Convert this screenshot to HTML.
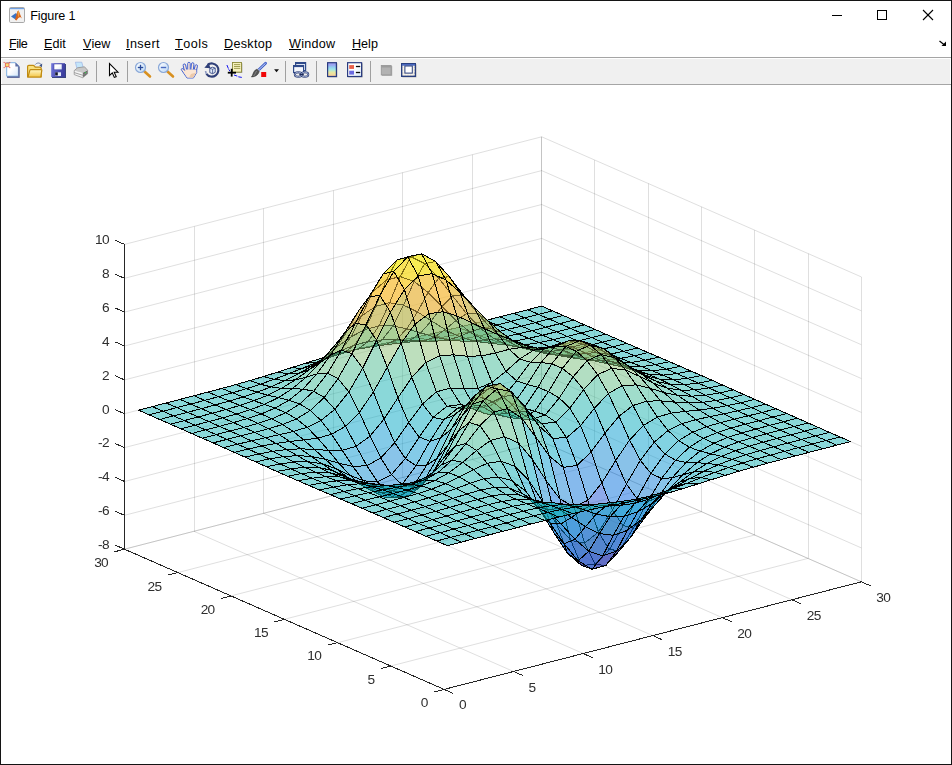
<!DOCTYPE html>
<html><head><meta charset="utf-8"><title>Figure 1</title>
<style>
html,body{margin:0;padding:0;background:#fff;}
body{width:952px;height:765px;position:relative;overflow:hidden;font-family:"Liberation Sans",Arial,sans-serif;}
#win{position:absolute;left:0;top:0;width:950px;height:763px;border:1px solid #141414;background:#fff;}
#title{position:absolute;left:30.2px;top:6.6px;letter-spacing:-0.12px;font-size:12.6px;color:#000;line-height:18px;white-space:nowrap;}
#menu{position:absolute;left:0;top:34.6px;height:18px;font-size:12.6px;color:#000;line-height:18px;white-space:nowrap;}
#menu span{position:absolute;top:0;}
#menu u{text-decoration:none;position:relative;display:inline-block;}
#menu u::after{content:"";position:absolute;left:0;right:0;top:14.4px;height:1px;background:#000;}
#tb{position:absolute;left:1px;top:57px;width:950px;height:26px;background:#f0f0f0;border-top:1px solid #a5a5a5;border-bottom:1px solid #a5a5a5;box-shadow:inset 0 1px 0 #fff, inset 1px 0 0 #fff, inset -1px 0 0 #fff;}
#chrome{position:absolute;left:0;top:0;}
</style></head><body>
<div id="win"></div>
<div id="title">Figure 1</div>
<div id="menu">
<span style="left:9px;letter-spacing:-0.5px"><u>F</u>ile</span>
<span style="left:44px"><u>E</u>dit</span>
<span style="left:83px"><u>V</u>iew</span>
<span style="left:126px;letter-spacing:0.4px"><u>I</u>nsert</span>
<span style="left:175px;letter-spacing:0.5px"><u>T</u>ools</span>
<span style="left:224px;letter-spacing:0.3px"><u>D</u>esktop</span>
<span style="left:289px;letter-spacing:0.25px"><u>W</u>indow</span>
<span style="left:352px"><u>H</u>elp</span>
</div>
<div id="tb"></div>
<svg id="chrome" width="952" height="90" viewBox="0 0 952 90">
<defs>
<linearGradient id="gpage" x1="0" y1="0" x2="1" y2="1"><stop offset="0" stop-color="#ffffff"/><stop offset="0.45" stop-color="#ffffff"/><stop offset="1" stop-color="#d6e6f8"/></linearGradient>
<linearGradient id="gfold" x1="0" y1="0" x2="0" y2="1"><stop offset="0" stop-color="#fff8c8"/><stop offset="1" stop-color="#f3c648"/></linearGradient>
<linearGradient id="gcb" x1="0" y1="0" x2="0" y2="1"><stop offset="0" stop-color="#a09af0"/><stop offset="0.18" stop-color="#9aa8f0"/><stop offset="0.32" stop-color="#92cdf0"/><stop offset="0.5" stop-color="#a2e8e6"/><stop offset="0.7" stop-color="#e6e8a2"/><stop offset="0.85" stop-color="#f0dc9c"/><stop offset="1" stop-color="#f8bc98"/></linearGradient>
<linearGradient id="gsave" x1="0" y1="0" x2="1" y2="0.3"><stop offset="0" stop-color="#7277dc"/><stop offset="1" stop-color="#3d3fa0"/></linearGradient>
<linearGradient id="glens" x1="0" y1="0" x2="1" y2="1"><stop offset="0" stop-color="#ffffff"/><stop offset="1" stop-color="#b9d6f5"/></linearGradient>
</defs>
<!-- title icon -->
<g>
<rect x="9.5" y="7.5" width="15" height="15" rx="1.2" fill="#f1f1f1" stroke="#a8a8a8"/>
<rect x="10" y="8" width="14" height="1.3" fill="#6f9fe0"/>
<rect x="10" y="9.3" width="14" height="0.8" fill="#dbe7f7"/>
<polygon points="11,16.5 16,13 17.5,15 15.5,19.5" fill="#3b74c4"/>
<polygon points="15,19.8 17.3,11.5 18.6,10.6 20,14 21.8,18.6 20.2,17 18.4,18 16.4,20.6" fill="#d8641a"/>
<polygon points="17.4,11.6 18.6,10.6 19.6,14 18.2,17.8" fill="#f0a040"/>
</g>
<!-- window buttons -->
<g stroke="#000" stroke-width="1" fill="none" shape-rendering="crispEdges">
<line x1="832" y1="15.5" x2="842" y2="15.5"/>
<rect x="877.5" y="10.5" width="9" height="9"/>
</g>
<g stroke="#000" stroke-width="1.1" fill="none">
<line x1="923" y1="10" x2="933" y2="20"/><line x1="933" y1="10" x2="923" y2="20"/>
</g>
<!-- dock arrow -->
<g stroke="#000" stroke-width="1.3" fill="#000">
<line x1="939.5" y1="41" x2="944.5" y2="45"/>
<polygon points="946,41.5 946,46 941.5,46" stroke="none"/>
</g>
<!-- toolbar separators -->
<g stroke="#a0a0a0" stroke-width="1" shape-rendering="crispEdges">
<line x1="96.5" y1="61" x2="96.5" y2="82"/>
<line x1="127.5" y1="61" x2="127.5" y2="82"/>
<line x1="285.5" y1="61" x2="285.5" y2="82"/>
<line x1="316.5" y1="61" x2="316.5" y2="82"/>
<line x1="370.5" y1="61" x2="370.5" y2="82"/>
</g>
<!-- new -->
<g>
<path d="M7,63 H15.5 L19.5,67 V77.5 H7 Z" fill="#6470a0"/>
<path d="M6.7,62.7 H15.4 L18.4,65.7 V76.2 H6.7 Z" fill="url(#gpage)" stroke="#6fa8e0" stroke-width="0.9"/>
<path d="M15.4,62.4 L19.6,66.6 H15.4 Z" fill="#5f6fa5"/>
<path d="M18.9,66.6 V77.3 H7.2" fill="none" stroke="#6470a0" stroke-width="1.4"/>
<rect x="5.4" y="63.100" width="3.600" height="3.600" fill="#f7e070" stroke="#e6705c" stroke-width="1"/>
<g fill="#e04a3a" fill-opacity="0.8"><rect x="3.6" y="61.9" width="1.1" height="1.1"/><rect x="9.2" y="61.9" width="1.100" height="1.1"/><rect x="3.6" y="67" width="1.1" height="1.1"/><rect x="9.2" y="67" width="1.100" height="1.100"/></g>
</g>
<!-- open -->
<g>
<path d="M27.6,77 V66.500 Q27.6,65.3 28.8,65.3 H33 Q34,65.3 34.5,66.2 L35.2,67.200 H40 Q41.2,67.200 41.2,68.400 V77 Z" fill="#f9e07c" stroke="#c08a10" stroke-width="1.200" stroke-linejoin="round"/>
<path d="M28,77 L29.800,70.300 Q30,69.600 30.800,69.600 H41.200 Q42,69.600 41.800,70.400 L40.800,77 Z" fill="url(#gfold)" stroke="#c08a10" stroke-width="1.200" stroke-linejoin="round"/>
<path d="M35.200,64.600 C36.800,62.600 39.600,62.400 41.300,64.600" fill="none" stroke="#60749c" stroke-width="0.900"/>
<polygon points="42.200,63.600 41.900,67.200 39.300,65.600" fill="#3f5488"/>
</g>
<!-- save -->
<g>
<rect x="52" y="64" width="14" height="14" fill="#3a4580"/>
<rect x="51.2" y="63.200" width="13.8" height="13.8" fill="url(#gsave)"/>
<rect x="54" y="64" width="8" height="5.8" fill="url(#gpage)"/>
<rect x="54" y="64" width="8" height="5.8" fill="none" stroke="#3d3fa0" stroke-width="0.5"/>
<rect x="55.200" y="72.300" width="5.800" height="3.700" fill="#e4ecfa"/>
<rect x="55.200" y="72.300" width="2.600" height="3.200" fill="#14142a"/>
</g>
<!-- print -->
<g>
<polygon points="75.400,62.200 81.800,62.200 83.200,67.400 76.800,68.200" fill="#c4e6fa" stroke="#8fa8e0" stroke-width="0.6"/>
<polygon points="74.200,70.600 77.500,67.800 84.500,66.800 87.600,70.200 87.600,73.800 82.600,77.700 74.200,74.600" fill="#d9d9d9"/>
<polygon points="82.600,72.800 87.600,70.200 87.600,73.800 82.600,77.700" fill="#6e6e6e"/>
<polygon points="74.200,70.600 82.600,72.800 82.600,77.700 74.200,74.600" fill="#f4f4f4"/>
<polygon points="74.200,70.600 77.500,67.800 84.500,66.800 87.600,70.200 82.600,72.800" fill="#c9c9c9"/>
<polyline points="74.200,72.600 82.600,75.200 87.600,72.200" fill="none" stroke="#8c8c8c" stroke-width="0.8"/>
<polygon points="74.200,70.600 77.500,67.800 84.500,66.800 87.600,70.200 87.600,73.800 82.600,77.700 74.200,74.600" fill="none" stroke="#8a8a8a" stroke-width="0.7"/>
<rect x="84.900" y="72" width="1.200" height="1.200" fill="#35c04a"/>
</g>
<!-- pointer -->
<path d="M109.5,63.5 V75.5 L112.3,72.9 L114.3,77.4 L116.2,76.6 L114.2,72.2 L118,72.2 Z" fill="#fff" stroke="#000" stroke-width="1.1" stroke-linejoin="miter"/>
<!-- zoom in -->
<g>
<line x1="144.5" y1="71.5" x2="150" y2="76.5" stroke="#d89020" stroke-width="2.6" stroke-linecap="round"/>
<circle cx="140.5" cy="67.5" r="5" fill="url(#glens)" stroke="#8aa8d8" stroke-width="1.2"/>
<g stroke="#2a4a9a" stroke-width="1.3"><line x1="137.8" y1="67.5" x2="143.2" y2="67.5"/><line x1="140.5" y1="64.8" x2="140.5" y2="70.2"/></g>
</g>
<!-- zoom out -->
<g>
<line x1="167.5" y1="71.5" x2="173" y2="76.5" stroke="#d89020" stroke-width="2.6" stroke-linecap="round"/>
<circle cx="163.5" cy="67.5" r="5" fill="url(#glens)" stroke="#8aa8d8" stroke-width="1.2"/>
<line x1="160.8" y1="67.5" x2="166.2" y2="67.5" stroke="#4a6ac0" stroke-width="1.4"/>
</g>
<!-- hand -->
<g fill="#fbe6d4" stroke="#3558d0" stroke-width="0.9" stroke-linejoin="round">
<rect x="184.600" y="63.800" width="2.500" height="9" rx="1.250" transform="rotate(-12 185.800 72)"/>
<rect x="187.700" y="62.300" width="2.500" height="9" rx="1.250"/>
<rect x="190.700" y="62.700" width="2.500" height="9" rx="1.250" transform="rotate(6 192 71)"/>
<rect x="193.600" y="64.600" width="2.400" height="8" rx="1.200" transform="rotate(14 194.800 72)"/>
<path d="M185.500,70.800 L182.800,68.700 C181.700,68 180.800,69.300 181.600,70.200 L187,78 H193.400 L196.700,72.600 V69.500 Z"/>
<path d="M185.400,69.400 H196.200 V72.500 L193.200,77.500 H187.300 L184.600,73.400 Z" stroke="none"/>
<path d="M193.200,77.500 L196.200,72.500 L191,74 L189,77.500 Z" fill="#ecc9aa" stroke="none"/>
</g>
<!-- rotate -->
<g fill="none">
<path d="M207.600,64.900 A6.600,6.600 0 1 1 206.400,73.800" stroke="#2f3f78" stroke-width="2.100"/>
<path d="M206.400,73.800 A6.600,6.600 0 0 1 205.600,71" stroke="#8c98c0" stroke-width="1.600"/>
<polygon points="204.300,67.800 208.800,62.800 210.400,68.200" fill="#2f3f78"/>
<path d="M209.800,68.300 L212.300,67.200 L215.200,68.100 V72.300 L212.600,73.700 L209.800,72.600 Z" fill="#e4eefb" stroke="#3a4c88" stroke-width="0.9" stroke-linejoin="round"/>
<path d="M209.800,68.300 L212.600,69.300 L215.200,68.100 M212.600,69.300 V73.700" stroke="#3a4c88" stroke-width="0.8"/>
</g>
<!-- data cursor -->
<g>
<rect x="233.300" y="63.300" width="9" height="9.600" fill="#9a9a9a"/>
<rect x="232.500" y="62.500" width="9" height="9.600" fill="#f6f1bc" stroke="#8c8a3a" stroke-width="0.9"/>
<g stroke="#8c8a3a" stroke-width="0.8"><line x1="234" y1="64.600" x2="240.200" y2="64.600"/><line x1="234" y1="66.500" x2="240.200" y2="66.500"/><line x1="234" y1="68.400" x2="240.200" y2="68.400"/></g>
<path d="M226.900,65 L228.400,68.600 M228.700,69.300 L230,71.300 M234,75 L237.300,76.100 M238.300,76.800 L241.800,77.400" fill="none" stroke="#1414f0" stroke-width="1"/>
<g stroke="#000" stroke-width="1.800"><line x1="227.800" y1="72.700" x2="236" y2="72.700"/><line x1="231.700" y1="68.800" x2="231.700" y2="76.600"/></g>
</g>
<!-- brush -->
<g>
<line x1="258.300" y1="70.200" x2="265.600" y2="63.200" stroke="#3c5cc8" stroke-width="2.700" stroke-linecap="round"/>
<line x1="258.800" y1="69.700" x2="265.300" y2="63.500" stroke="#dfe7fb" stroke-width="0.900" stroke-linecap="round"/>
<line x1="257.300" y1="69" x2="259.300" y2="71.200" stroke="#c8cee0" stroke-width="1.200"/>
<path d="M257.200,69.300 L259.200,71.400 C258.600,74.600 255.200,77 251.400,77 C253,75.400 252.800,72.800 254.600,70.800 C255.600,69.700 256.400,69.200 257.200,69.300 Z" fill="#555" stroke="#2e2e2e" stroke-width="0.5"/>
<path d="M256.600,71 C255.500,72.400 255.200,74.400 253.600,76" fill="none" stroke="#9a9a9a" stroke-width="0.7"/>
<rect x="261.200" y="72" width="5" height="5" fill="#f00808"/>
</g>
<polygon points="274.100,69.200 279,69.200 276.550,72.200" fill="#111"/>
<!-- link -->
<g>
<rect x="295.600" y="62.600" width="10" height="8" fill="#eef3fc" stroke="#2f4a8a" stroke-width="1.200"/>
<rect x="295.600" y="62.600" width="10" height="1.500" fill="#2f4a8a"/>
<rect x="293.600" y="65.600" width="10" height="7" fill="#f4f7fd" stroke="#2f4a8a" stroke-width="1.200"/>
<rect x="293.600" y="65.600" width="10" height="1.500" fill="#2f4a8a"/>
<g fill="none" stroke="#2b3c72" stroke-width="1.900"><ellipse cx="298.300" cy="74.500" rx="3.500" ry="2.300"/><ellipse cx="304.800" cy="74.500" rx="3.500" ry="2.300"/></g>
<g fill="none" stroke="#c3d0f0" stroke-width="0.700"><ellipse cx="298.300" cy="74.500" rx="3.500" ry="2.300"/><ellipse cx="304.800" cy="74.500" rx="3.500" ry="2.300"/></g>
<line x1="299.300" y1="74.500" x2="303.800" y2="74.500" stroke="#1c2a5a" stroke-width="1.600"/>
</g>
<!-- colorbar -->
<rect x="328.300" y="63.300" width="9" height="14" fill="#9c9c9c"/>
<rect x="327.600" y="62.700" width="8.800" height="13.800" fill="url(#gcb)" stroke="#2a3c80" stroke-width="1.200"/>
<!-- legend -->
<g>
<rect x="348.300" y="63.300" width="14.300" height="14" fill="#9c9c9c"/>
<rect x="347.600" y="62.700" width="14" height="13.800" fill="url(#gpage)" stroke="#2a3c80" stroke-width="1.200"/>
<rect x="349.200" y="65.100" width="4.800" height="3.800" fill="#e8604a"/>
<rect x="349.200" y="70.700" width="4.800" height="3.900" fill="#6a6ae0"/>
<g stroke="#0a0a0a" stroke-width="1.300"><line x1="355.900" y1="66.500" x2="360.200" y2="66.500"/><line x1="355.900" y1="72.500" x2="360.200" y2="72.500"/></g>
</g>
<!-- hide plot tools -->
<g>
<rect x="381.900" y="66.100" width="10.300" height="9.700" fill="#a6a6a6"/>
<rect x="381.300" y="65.500" width="9.800" height="9.400" fill="#b2b2b2" stroke="#999" stroke-width="0.900"/>
<rect x="381.300" y="65.500" width="9.800" height="2" fill="#9c9c9c"/>
</g>
<!-- show plot tools -->
<g>
<rect x="402.400" y="64.300" width="14" height="13" fill="#9c9c9c"/>
<rect x="401.700" y="63.700" width="13.600" height="12.600" fill="#efe9dc" stroke="#2a4080" stroke-width="1.400"/>
<rect x="402" y="64" width="13" height="1.700" fill="#4a68c0"/>
<rect x="404.900" y="66" width="7.400" height="7.100" fill="#fff" stroke="#2a4080" stroke-width="1"/>
<g stroke="#fff" stroke-width="0.900" stroke-dasharray="0.800,0.800"><line x1="403.300" y1="66.400" x2="403.300" y2="73"/><line x1="414" y1="66.400" x2="414" y2="73"/><line x1="402.800" y1="74.700" x2="414.600" y2="74.700"/></g>
</g>
</svg>
<svg width="952" height="765" viewBox="0 0 952 765" style="position:absolute;left:0;top:0;will-change:transform">
<g stroke-linecap="butt" stroke-opacity="0.15">
<line x1="444.1" y1="689.4" x2="124.5" y2="549.2" stroke="#262626" stroke-width="1"/>
<line x1="444.1" y1="689.4" x2="861.3" y2="581.8" stroke="#262626" stroke-width="1"/>
<line x1="124.5" y1="549.2" x2="124.5" y2="244.4" stroke="#262626" stroke-width="1"/>
<line x1="861.5" y1="581.8" x2="861.5" y2="276.9" stroke="#262626" stroke-width="1"/>
<line x1="513.6" y1="671.5" x2="194.0" y2="531.3" stroke="#262626" stroke-width="1"/>
<line x1="390.8" y1="666.0" x2="808.0" y2="558.4" stroke="#262626" stroke-width="1"/>
<line x1="194.5" y1="531.3" x2="194.5" y2="226.5" stroke="#262626" stroke-width="1"/>
<line x1="808.5" y1="558.4" x2="808.5" y2="253.6" stroke="#262626" stroke-width="1"/>
<line x1="583.2" y1="653.5" x2="263.6" y2="513.3" stroke="#262626" stroke-width="1"/>
<line x1="337.6" y1="642.7" x2="754.8" y2="535.0" stroke="#262626" stroke-width="1"/>
<line x1="263.5" y1="513.3" x2="263.5" y2="208.5" stroke="#262626" stroke-width="1"/>
<line x1="754.5" y1="535.0" x2="754.5" y2="230.2" stroke="#262626" stroke-width="1"/>
<line x1="652.7" y1="635.6" x2="333.1" y2="495.4" stroke="#262626" stroke-width="1"/>
<line x1="284.3" y1="619.3" x2="701.5" y2="511.7" stroke="#262626" stroke-width="1"/>
<line x1="333.5" y1="495.4" x2="333.5" y2="190.6" stroke="#262626" stroke-width="1"/>
<line x1="701.5" y1="511.7" x2="701.5" y2="206.8" stroke="#262626" stroke-width="1"/>
<line x1="722.2" y1="617.6" x2="402.6" y2="477.4" stroke="#262626" stroke-width="1"/>
<line x1="231.0" y1="595.9" x2="648.2" y2="488.3" stroke="#262626" stroke-width="1"/>
<line x1="402.5" y1="477.4" x2="402.5" y2="172.6" stroke="#262626" stroke-width="1"/>
<line x1="648.5" y1="488.3" x2="648.5" y2="183.5" stroke="#262626" stroke-width="1"/>
<line x1="791.8" y1="599.7" x2="472.2" y2="459.5" stroke="#262626" stroke-width="1"/>
<line x1="177.8" y1="572.6" x2="595.0" y2="464.9" stroke="#262626" stroke-width="1"/>
<line x1="472.5" y1="459.5" x2="472.5" y2="154.7" stroke="#262626" stroke-width="1"/>
<line x1="594.5" y1="464.9" x2="594.5" y2="160.1" stroke="#262626" stroke-width="1"/>
<line x1="861.3" y1="581.8" x2="541.7" y2="441.6" stroke="#262626" stroke-width="1"/>
<line x1="124.5" y1="549.2" x2="541.7" y2="441.6" stroke="#262626" stroke-width="1"/>
<line x1="541.5" y1="441.6" x2="541.5" y2="136.8" stroke="#262626" stroke-width="1"/>
<line x1="541.5" y1="441.6" x2="541.5" y2="136.8" stroke="#262626" stroke-width="1"/>
<line x1="124.5" y1="549.2" x2="541.7" y2="441.6" stroke="#262626" stroke-width="1"/>
<line x1="541.7" y1="441.6" x2="861.3" y2="581.8" stroke="#262626" stroke-width="1"/>
<line x1="124.5" y1="515.3" x2="541.7" y2="407.7" stroke="#262626" stroke-width="1"/>
<line x1="541.7" y1="407.7" x2="861.3" y2="547.9" stroke="#262626" stroke-width="1"/>
<line x1="124.5" y1="481.5" x2="541.7" y2="373.8" stroke="#262626" stroke-width="1"/>
<line x1="541.7" y1="373.8" x2="861.3" y2="514.0" stroke="#262626" stroke-width="1"/>
<line x1="124.5" y1="447.6" x2="541.7" y2="340.0" stroke="#262626" stroke-width="1"/>
<line x1="541.7" y1="340.0" x2="861.3" y2="480.1" stroke="#262626" stroke-width="1"/>
<line x1="124.5" y1="413.7" x2="541.7" y2="306.1" stroke="#262626" stroke-width="1"/>
<line x1="541.7" y1="306.1" x2="861.3" y2="446.3" stroke="#262626" stroke-width="1"/>
<line x1="124.5" y1="379.9" x2="541.7" y2="272.2" stroke="#262626" stroke-width="1"/>
<line x1="541.7" y1="272.2" x2="861.3" y2="412.4" stroke="#262626" stroke-width="1"/>
<line x1="124.5" y1="346.0" x2="541.7" y2="238.4" stroke="#262626" stroke-width="1"/>
<line x1="541.7" y1="238.4" x2="861.3" y2="378.5" stroke="#262626" stroke-width="1"/>
<line x1="124.5" y1="312.1" x2="541.7" y2="204.5" stroke="#262626" stroke-width="1"/>
<line x1="541.7" y1="204.5" x2="861.3" y2="344.7" stroke="#262626" stroke-width="1"/>
<line x1="124.5" y1="278.3" x2="541.7" y2="170.6" stroke="#262626" stroke-width="1"/>
<line x1="541.7" y1="170.6" x2="861.3" y2="310.8" stroke="#262626" stroke-width="1"/>
<line x1="124.5" y1="244.4" x2="541.7" y2="136.8" stroke="#262626" stroke-width="1"/>
<line x1="541.7" y1="136.8" x2="861.3" y2="276.9" stroke="#262626" stroke-width="1"/>
</g>
<g stroke="#000" stroke-width="1" stroke-linejoin="round" shape-rendering="crispEdges" fill-opacity="0.5">
<polygon fill="#15b1b4" points="538.4,314.3 552.4,310.8 541.7,306.1 527.8,309.7"/>
<polygon fill="#15b1b4" points="524.5,317.9 538.4,314.3 527.8,309.7 513.9,313.3"/>
<polygon fill="#15b1b4" points="549.1,319.0 563.0,315.4 552.4,310.8 538.4,314.3"/>
<polygon fill="#15b1b4" points="510.6,321.5 524.5,317.9 513.9,313.3 500.0,316.8"/>
<polygon fill="#15b1b4" points="535.2,322.6 549.1,319.0 538.4,314.3 524.5,317.9"/>
<polygon fill="#15b1b4" points="559.8,323.7 573.7,320.1 563.0,315.4 549.1,319.0"/>
<polygon fill="#15b1b4" points="496.7,325.0 510.6,321.5 500.0,316.8 486.1,320.4"/>
<polygon fill="#15b1b4" points="521.3,326.1 535.2,322.6 524.5,317.9 510.6,321.5"/>
<polygon fill="#15b1b4" points="545.8,327.2 559.8,323.7 549.1,319.0 535.2,322.6"/>
<polygon fill="#15b1b4" points="570.4,328.3 584.3,324.8 573.7,320.1 559.8,323.7"/>
<polygon fill="#15b1b4" points="482.8,328.4 496.7,325.0 486.1,320.4 472.2,323.9"/>
<polygon fill="#15b1b4" points="507.4,329.5 521.3,326.1 510.6,321.5 496.7,325.0"/>
<polygon fill="#15b1b4" points="531.9,330.7 545.8,327.2 535.2,322.6 521.3,326.1"/>
<polygon fill="#15b1b4" points="556.5,331.8 570.4,328.3 559.8,323.7 545.8,327.2"/>
<polygon fill="#15b1b4" points="468.9,331.7 482.8,328.4 472.2,323.9 458.3,327.4"/>
<polygon fill="#15b1b4" points="581.1,333.0 595.0,329.4 584.3,324.8 570.4,328.3"/>
<polygon fill="#15b1b4" points="493.5,332.8 507.4,329.5 496.7,325.0 482.8,328.4"/>
<polygon fill="#15b1b4" points="518.0,334.0 531.9,330.7 521.3,326.1 507.4,329.5"/>
<polygon fill="#15b1b4" points="542.6,335.2 556.5,331.8 545.8,327.2 531.9,330.7"/>
<polygon fill="#15b1b4" points="455.0,334.8 468.9,331.7 458.3,327.4 444.4,330.7"/>
<polygon fill="#15b1b4" points="567.2,336.4 581.1,333.0 570.4,328.3 556.5,331.8"/>
<polygon fill="#15b1b4" points="479.6,335.8 493.5,332.8 482.8,328.4 468.9,331.7"/>
<polygon fill="#15b1b4" points="591.7,337.6 605.6,334.1 595.0,329.4 581.1,333.0"/>
<polygon fill="#15b1b4" points="504.1,337.0 518.0,334.0 507.4,329.5 493.5,332.8"/>
<polygon fill="#15b1b4" points="528.7,338.3 542.6,335.2 531.9,330.7 518.0,334.0"/>
<polygon fill="#15b1b4" points="441.1,337.5 455.0,334.8 444.4,330.7 430.4,334.0"/>
<polygon fill="#15b1b4" points="553.2,339.7 567.2,336.4 556.5,331.8 542.6,335.2"/>
<polygon fill="#1db3af" points="465.7,338.3 479.6,335.8 468.9,331.7 455.0,334.8"/>
<polygon fill="#15b1b4" points="577.8,341.0 591.7,337.6 581.1,333.0 567.2,336.4"/>
<polygon fill="#1db3af" points="490.2,339.5 504.1,337.0 493.5,332.8 479.6,335.8"/>
<polygon fill="#15b1b4" points="602.4,342.2 616.3,338.7 605.6,334.1 591.7,337.6"/>
<polygon fill="#15b1b4" points="514.8,341.0 528.7,338.3 518.0,334.0 504.1,337.0"/>
<polygon fill="#1db3af" points="427.2,339.8 441.1,337.5 430.4,334.0 416.5,337.0"/>
<polygon fill="#15b1b4" points="539.3,342.6 553.2,339.7 542.6,335.2 528.7,338.3"/>
<polygon fill="#1db3af" points="451.8,340.1 465.7,338.3 455.0,334.8 441.1,337.5"/>
<polygon fill="#15b1b4" points="563.9,344.1 577.8,341.0 567.2,336.4 553.2,339.7"/>
<polygon fill="#1db3af" points="476.3,341.0 490.2,339.5 479.6,335.8 465.7,338.3"/>
<polygon fill="#15b1b4" points="588.5,345.5 602.4,342.2 591.7,337.6 577.8,341.0"/>
<polygon fill="#1db3af" points="500.9,342.6 514.8,341.0 504.1,337.0 490.2,339.5"/>
<polygon fill="#15b1b4" points="613.0,346.8 626.9,343.4 616.3,338.7 602.4,342.2"/>
<polygon fill="#1db3af" points="413.3,341.7 427.2,339.8 416.5,337.0 402.6,339.8"/>
<polygon fill="#1db3af" points="525.4,344.7 539.3,342.6 528.7,338.3 514.8,341.0"/>
<polygon fill="#15b1b4" points="550.0,346.7 563.9,344.1 553.2,339.7 539.3,342.6"/>
<polygon fill="#25b5a9" points="437.8,341.0 451.8,340.1 441.1,337.5 427.2,339.8"/>
<polygon fill="#15b1b4" points="574.6,348.4 588.5,345.5 577.8,341.0 563.9,344.1"/>
<polygon fill="#25b5a9" points="462.4,341.2 476.3,341.0 465.7,338.3 451.8,340.1"/>
<polygon fill="#15b1b4" points="599.1,349.9 613.0,346.8 602.4,342.2 588.5,345.5"/>
<polygon fill="#25b5a9" points="487.0,342.9 500.9,342.6 490.2,339.5 476.3,341.0"/>
<polygon fill="#25b5a9" points="399.4,343.2 413.3,341.7 402.6,339.8 388.7,342.5"/>
<polygon fill="#15b1b4" points="623.7,351.3 637.6,348.0 626.9,343.4 613.0,346.8"/>
<polygon fill="#1db3af" points="511.5,345.4 525.4,344.7 514.8,341.0 500.9,342.6"/>
<polygon fill="#1db3af" points="536.1,348.2 550.0,346.7 539.3,342.6 525.4,344.7"/>
<polygon fill="#2eb7a4" points="423.9,341.0 437.8,341.0 427.2,339.8 413.3,341.7"/>
<polygon fill="#1db3af" points="560.6,350.6 574.6,348.4 563.9,344.1 550.0,346.7"/>
<polygon fill="#15b1b4" points="585.2,352.6 599.1,349.9 588.5,345.5 574.6,348.4"/>
<polygon fill="#2eb7a4" points="448.5,339.9 462.4,341.2 451.8,340.1 437.8,341.0"/>
<polygon fill="#15b1b4" points="609.8,354.2 623.7,351.3 613.0,346.8 599.1,349.9"/>
<polygon fill="#25b5a9" points="385.5,344.8 399.4,343.2 388.7,342.5 374.8,345.3"/>
<polygon fill="#2eb7a4" points="473.1,341.0 487.0,342.9 476.3,341.0 462.4,341.2"/>
<polygon fill="#15b1b4" points="634.3,355.8 648.2,352.6 637.6,348.0 623.7,351.3"/>
<polygon fill="#2eb7a4" points="497.6,344.1 511.5,345.4 500.9,342.6 487.0,342.9"/>
<polygon fill="#25b5a9" points="522.2,348.0 536.1,348.2 525.4,344.7 511.5,345.4"/>
<polygon fill="#1db3af" points="546.7,351.6 560.6,350.6 550.0,346.7 536.1,348.2"/>
<polygon fill="#38b99e" points="410.0,340.4 423.9,341.0 413.3,341.7 399.4,343.2"/>
<polygon fill="#1db3af" points="571.3,354.3 585.2,352.6 574.6,348.4 560.6,350.6"/>
<polygon fill="#1db3af" points="595.9,356.5 609.8,354.2 599.1,349.9 585.2,352.6"/>
<polygon fill="#2eb7a4" points="371.6,346.7 385.5,344.8 374.8,345.3 360.9,348.1"/>
<polygon fill="#42bb98" points="434.6,337.0 448.5,339.9 437.8,341.0 423.9,341.0"/>
<polygon fill="#15b1b4" points="620.4,358.4 634.3,355.8 623.7,351.3 609.8,354.2"/>
<polygon fill="#15b1b4" points="645.0,360.2 658.9,357.2 648.2,352.6 634.3,355.8"/>
<polygon fill="#42bb98" points="459.2,336.5 473.1,341.0 462.4,341.2 448.5,339.9"/>
<polygon fill="#42bb98" points="483.7,339.8 497.6,344.1 487.0,342.9 473.1,341.0"/>
<polygon fill="#38b99e" points="508.3,345.2 522.2,348.0 511.5,345.4 497.6,344.1"/>
<polygon fill="#2eb7a4" points="532.8,350.6 546.7,351.6 536.1,348.2 522.2,348.0"/>
<polygon fill="#42bb98" points="396.1,339.8 410.0,340.4 399.4,343.2 385.5,344.8"/>
<polygon fill="#25b5a9" points="557.4,354.6 571.3,354.3 560.6,350.6 546.7,351.6"/>
<polygon fill="#1db3af" points="582.0,357.6 595.9,356.5 585.2,352.6 571.3,354.3"/>
<polygon fill="#2eb7a4" points="357.7,349.3 371.6,346.7 360.9,348.1 347.0,351.3"/>
<polygon fill="#1db3af" points="606.5,360.2 620.4,358.4 609.8,354.2 595.9,356.5"/>
<polygon fill="#1db3af" points="631.1,362.5 645.0,360.2 634.3,355.8 620.4,358.4"/>
<polygon fill="#59bd8c" points="420.7,332.9 434.6,337.0 423.9,341.0 410.0,340.4"/>
<polygon fill="#15b1b4" points="655.6,364.6 669.5,361.7 658.9,357.2 645.0,360.2"/>
<polygon fill="#4dbc92" points="382.2,339.9 396.1,339.8 385.5,344.8 371.6,346.7"/>
<polygon fill="#2eb7a4" points="343.8,352.9 357.7,349.3 347.0,351.3 333.1,354.9"/>
<polygon fill="#65be86" points="445.2,329.5 459.2,336.5 448.5,339.9 434.6,337.0"/>
<polygon fill="#2eb7a4" points="543.5,353.0 557.4,354.6 546.7,351.6 532.8,350.6"/>
<polygon fill="#38b99e" points="518.9,346.9 532.8,350.6 522.2,348.0 508.3,345.2"/>
<polygon fill="#25b5a9" points="568.0,357.2 582.0,357.6 571.3,354.3 557.4,354.6"/>
<polygon fill="#4dbc92" points="494.4,338.9 508.3,345.2 497.6,344.1 483.7,339.8"/>
<polygon fill="#65be86" points="469.8,332.0 483.7,339.8 473.1,341.0 459.2,336.5"/>
<polygon fill="#25b5a9" points="592.6,360.5 606.5,360.2 595.9,356.5 582.0,357.6"/>
<polygon fill="#1db3af" points="617.2,363.6 631.1,362.5 620.4,358.4 606.5,360.2"/>
<polygon fill="#1db3af" points="641.7,366.6 655.6,364.6 645.0,360.2 631.1,362.5"/>
<polygon fill="#15b1b4" points="666.3,369.1 680.2,366.3 669.5,361.7 655.6,364.6"/>
<polygon fill="#2eb7a4" points="329.8,357.5 343.8,352.9 333.1,354.9 319.2,358.9"/>
<polygon fill="#71bf80" points="406.8,328.8 420.7,332.9 410.0,340.4 396.1,339.8"/>
<polygon fill="#4dbc92" points="368.3,341.5 382.2,339.9 371.6,346.7 357.7,349.3"/>
<polygon fill="#38b99e" points="554.1,354.9 568.0,357.2 557.4,354.6 543.5,353.0"/>
<polygon fill="#2eb7a4" points="578.7,358.9 592.6,360.5 582.0,357.6 568.0,357.2"/>
<polygon fill="#42bb98" points="529.6,349.0 543.5,353.0 532.8,350.6 518.9,346.9"/>
<polygon fill="#25b5a9" points="603.3,362.9 617.2,363.6 606.5,360.2 592.6,360.5"/>
<polygon fill="#25b5a9" points="315.9,362.7 329.8,357.5 319.2,358.9 305.3,363.2"/>
<polygon fill="#25b5a9" points="627.8,367.0 641.7,366.6 631.1,362.5 617.2,363.6"/>
<polygon fill="#87bf77" points="431.3,320.8 445.2,329.5 434.6,337.0 420.7,332.9"/>
<polygon fill="#59bd8c" points="505.0,339.6 518.9,346.9 508.3,345.2 494.4,338.9"/>
<polygon fill="#1db3af" points="652.4,370.8 666.3,369.1 655.6,364.6 641.7,366.6"/>
<polygon fill="#4dbc92" points="354.4,345.1 368.3,341.5 357.7,349.3 343.8,352.9"/>
<polygon fill="#15b1b4" points="676.9,373.6 690.8,371.0 680.2,366.3 666.3,369.1"/>
<polygon fill="#7cbf7b" points="480.5,328.4 494.4,338.9 483.7,339.8 469.8,332.0"/>
<polygon fill="#92bf73" points="455.9,320.6 469.8,332.0 459.2,336.5 445.2,329.5"/>
<polygon fill="#87bf77" points="392.9,326.0 406.8,328.8 396.1,339.8 382.2,339.9"/>
<polygon fill="#25b5a9" points="302.0,368.4 315.9,362.7 305.3,363.2 291.4,367.7"/>
<polygon fill="#4dbc92" points="340.5,350.7 354.4,345.1 343.8,352.9 329.8,357.5"/>
<polygon fill="#42bb98" points="564.8,355.6 578.7,358.9 568.0,357.2 554.1,354.9"/>
<polygon fill="#4dbc92" points="540.2,351.0 554.1,354.9 543.5,353.0 529.6,349.0"/>
<polygon fill="#38b99e" points="589.4,359.8 603.3,362.9 592.6,360.5 578.7,358.9"/>
<polygon fill="#2eb7a4" points="613.9,365.1 627.8,367.0 617.2,363.6 603.3,362.9"/>
<polygon fill="#25b5a9" points="638.5,370.6 652.4,370.8 641.7,366.6 627.8,367.0"/>
<polygon fill="#1db3af" points="663.0,375.1 676.9,373.6 666.3,369.1 652.4,370.8"/>
<polygon fill="#65be86" points="515.7,342.3 529.6,349.0 518.9,346.9 505.0,339.6"/>
<polygon fill="#15b1b4" points="687.6,378.3 701.5,375.6 690.8,371.0 676.9,373.6"/>
<polygon fill="#1db3af" points="288.1,374.0 302.0,368.4 291.4,367.7 277.5,372.1"/>
<polygon fill="#aebe67" points="417.4,311.9 431.3,320.8 420.7,332.9 406.8,328.8"/>
<polygon fill="#92bf73" points="379.0,325.9 392.9,326.0 382.2,339.9 368.3,341.5"/>
<polygon fill="#42bb98" points="326.6,357.8 340.5,350.7 329.8,357.5 315.9,362.7"/>
<polygon fill="#87bf77" points="491.1,328.3 505.0,339.6 494.4,338.9 480.5,328.4"/>
<polygon fill="#1db3af" points="274.2,379.3 288.1,374.0 277.5,372.1 263.6,376.5"/>
<polygon fill="#25b5a9" points="649.1,374.6 663.0,375.1 652.4,370.8 638.5,370.6"/>
<polygon fill="#38b99e" points="312.7,365.6 326.6,357.8 315.9,362.7 302.0,368.4"/>
<polygon fill="#b7bd64" points="442.0,306.7 455.9,320.6 445.2,329.5 431.3,320.8"/>
<polygon fill="#aebe67" points="466.6,313.7 480.5,328.4 469.8,332.0 455.9,320.6"/>
<polygon fill="#1db3af" points="673.7,379.8 687.6,378.3 676.9,373.6 663.0,375.1"/>
<polygon fill="#38b99e" points="624.6,367.6 638.5,370.6 627.8,367.0 613.9,365.1"/>
<polygon fill="#42bb98" points="600.0,360.3 613.9,365.1 603.3,362.9 589.4,359.8"/>
<polygon fill="#15b1b4" points="698.2,383.1 712.2,380.3 701.5,375.6 687.6,378.3"/>
<polygon fill="#59bd8c" points="550.9,351.5 564.8,355.6 554.1,354.9 540.2,351.0"/>
<polygon fill="#4dbc92" points="575.4,354.9 589.4,359.8 578.7,358.9 564.8,355.6"/>
<polygon fill="#92bf73" points="365.1,329.5 379.0,325.9 368.3,341.5 354.4,345.1"/>
<polygon fill="#65be86" points="526.3,345.9 540.2,351.0 529.6,349.0 515.7,342.3"/>
<polygon fill="#2eb7a4" points="298.8,373.4 312.7,365.6 302.0,368.4 288.1,374.0"/>
<polygon fill="#15b1b4" points="260.3,384.2 274.2,379.3 263.6,376.5 249.7,380.6"/>
<polygon fill="#87bf77" points="501.8,332.9 515.7,342.3 505.0,339.6 491.1,328.3"/>
<polygon fill="#c0bc60" points="403.5,305.1 417.4,311.9 406.8,328.8 392.9,326.0"/>
<polygon fill="#87bf77" points="351.2,336.7 365.1,329.5 354.4,345.1 340.5,350.7"/>
<polygon fill="#25b5a9" points="659.8,379.2 673.7,379.8 663.0,375.1 649.1,374.6"/>
<polygon fill="#1db3af" points="684.3,384.7 698.2,383.1 687.6,378.3 673.7,379.8"/>
<polygon fill="#25b5a9" points="284.9,380.6 298.8,373.4 288.1,374.0 274.2,379.3"/>
<polygon fill="#15b1b4" points="708.9,387.9 722.8,385.1 712.2,380.3 698.2,383.1"/>
<polygon fill="#38b99e" points="635.2,371.0 649.1,374.6 638.5,370.6 624.6,367.6"/>
<polygon fill="#15b1b4" points="246.4,388.7 260.3,384.2 249.7,380.6 235.8,384.6"/>
<polygon fill="#4dbc92" points="610.7,361.3 624.6,367.6 613.9,365.1 600.0,360.3"/>
<polygon fill="#71bf80" points="337.2,346.8 351.2,336.7 340.5,350.7 326.6,357.8"/>
<polygon fill="#71bf80" points="537.0,348.1 550.9,351.5 540.2,351.0 526.3,345.9"/>
<polygon fill="#71bf80" points="561.5,349.8 575.4,354.9 564.8,355.6 550.9,351.5"/>
<polygon fill="#65be86" points="586.1,353.4 600.0,360.3 589.4,359.8 575.4,354.9"/>
<polygon fill="#b7bd64" points="477.2,313.1 491.1,328.3 480.5,328.4 466.6,313.7"/>
<polygon fill="#1db3af" points="271.0,386.9 284.9,380.6 274.2,379.3 260.3,384.2"/>
<polygon fill="#7cbf7b" points="512.4,340.4 526.3,345.9 515.7,342.3 501.8,332.9"/>
<polygon fill="#59bd8c" points="323.3,358.2 337.2,346.8 326.6,357.8 312.7,365.6"/>
<polygon fill="#e1b952" points="428.1,292.6 442.0,306.7 431.3,320.8 417.4,311.9"/>
<polygon fill="#15b1b4" points="232.5,392.8 246.4,388.7 235.8,384.6 221.8,388.4"/>
<polygon fill="#1db3af" points="695.0,389.9 708.9,387.9 698.2,383.1 684.3,384.7"/>
<polygon fill="#25b5a9" points="670.4,384.5 684.3,384.7 673.7,379.8 659.8,379.2"/>
<polygon fill="#d1bb59" points="389.6,302.7 403.5,305.1 392.9,326.0 379.0,325.9"/>
<polygon fill="#d9ba56" points="452.6,296.0 466.6,313.7 455.9,320.6 442.0,306.7"/>
<polygon fill="#15b1b4" points="719.6,392.9 733.5,389.9 722.8,385.1 708.9,387.9"/>
<polygon fill="#42bb98" points="309.4,369.6 323.3,358.2 312.7,365.6 298.8,373.4"/>
<polygon fill="#38b99e" points="645.9,375.6 659.8,379.2 649.1,374.6 635.2,371.0"/>
<polygon fill="#1db3af" points="257.1,392.2 271.0,386.9 260.3,384.2 246.4,388.7"/>
<polygon fill="#2eb7a4" points="295.5,379.8 309.4,369.6 298.8,373.4 284.9,380.6"/>
<polygon fill="#59bd8c" points="621.3,363.8 635.2,371.0 624.6,367.6 610.7,361.3"/>
<polygon fill="#aebe67" points="487.9,320.8 501.8,332.9 491.1,328.3 477.2,313.1"/>
<polygon fill="#15b1b4" points="218.6,396.6 232.5,392.8 221.8,388.4 207.9,392.1"/>
<polygon fill="#7cbf7b" points="523.1,347.2 537.0,348.1 526.3,345.9 512.4,340.4"/>
<polygon fill="#7cbf7b" points="547.6,347.4 561.5,349.8 550.9,351.5 537.0,348.1"/>
<polygon fill="#71bf80" points="596.8,352.6 610.7,361.3 600.0,360.3 586.1,353.4"/>
<polygon fill="#25b5a9" points="281.6,388.3 295.5,379.8 284.9,380.6 271.0,386.9"/>
<polygon fill="#25b5a9" points="681.1,390.2 695.0,389.9 684.3,384.7 670.4,384.5"/>
<polygon fill="#87bf77" points="572.2,346.8 586.1,353.4 575.4,354.9 561.5,349.8"/>
<polygon fill="#1db3af" points="705.6,395.2 719.6,392.9 708.9,387.9 695.0,389.9"/>
<polygon fill="#d1bb59" points="375.7,306.3 389.6,302.7 379.0,325.9 365.1,329.5"/>
<polygon fill="#15b1b4" points="243.2,396.9 257.1,392.2 246.4,388.7 232.5,392.8"/>
<polygon fill="#15b1b4" points="730.2,397.8 744.1,394.6 733.5,389.9 719.6,392.9"/>
<polygon fill="#38b99e" points="656.5,381.4 670.4,384.5 659.8,379.2 645.9,375.6"/>
<polygon fill="#9cbf6f" points="498.5,334.8 512.4,340.4 501.8,332.9 487.9,320.8"/>
<polygon fill="#1db3af" points="267.7,395.2 281.6,388.3 271.0,386.9 257.1,392.2"/>
<polygon fill="#15b1b4" points="204.7,400.4 218.6,396.6 207.9,392.1 194.0,395.7"/>
<polygon fill="#c0bc60" points="361.8,315.8 375.7,306.3 365.1,329.5 351.2,336.7"/>
<polygon fill="#fdbe3d" points="414.2,281.5 428.1,292.6 417.4,311.9 403.5,305.1"/>
<polygon fill="#59bd8c" points="632.0,368.4 645.9,375.6 635.2,371.0 621.3,363.8"/>
<polygon fill="#e9b94e" points="463.3,295.0 477.2,313.1 466.6,313.7 452.6,296.0"/>
<polygon fill="#15b1b4" points="229.2,401.1 243.2,396.9 232.5,392.8 218.6,396.6"/>
<polygon fill="#aebe67" points="347.9,329.9 361.8,315.8 351.2,336.7 337.2,346.8"/>
<polygon fill="#1db3af" points="691.7,396.2 705.6,395.2 695.0,389.9 681.1,390.2"/>
<polygon fill="#7cbf7b" points="533.7,350.1 547.6,347.4 537.0,348.1 523.1,347.2"/>
<polygon fill="#15b1b4" points="716.3,400.5 730.2,397.8 719.6,392.9 705.6,395.2"/>
<polygon fill="#7cbf7b" points="509.2,349.3 523.1,347.2 512.4,340.4 498.5,334.8"/>
<polygon fill="#87bf77" points="334.0,346.4 347.9,329.9 337.2,346.8 323.3,358.2"/>
<polygon fill="#65be86" points="320.1,362.7 334.0,346.4 323.3,358.2 309.4,369.6"/>
<polygon fill="#2eb7a4" points="667.2,388.1 681.1,390.2 670.4,384.5 656.5,381.4"/>
<polygon fill="#42bb98" points="306.2,377.1 320.1,362.7 309.4,369.6 295.5,379.8"/>
<polygon fill="#15b1b4" points="740.9,402.7 754.8,399.4 744.1,394.6 730.2,397.8"/>
<polygon fill="#15b1b4" points="253.8,400.7 267.7,395.2 257.1,392.2 243.2,396.9"/>
<polygon fill="#7cbf7b" points="607.4,354.0 621.3,363.8 610.7,361.3 596.8,352.6"/>
<polygon fill="#ffc337" points="438.7,278.1 452.6,296.0 442.0,306.7 428.1,292.6"/>
<polygon fill="#15b1b4" points="190.8,404.0 204.7,400.4 194.0,395.7 180.1,399.4"/>
<polygon fill="#92bf73" points="558.3,344.1 572.2,346.8 561.5,349.8 547.6,347.4"/>
<polygon fill="#2eb7a4" points="292.3,388.7 306.2,377.1 295.5,379.8 281.6,388.3"/>
<polygon fill="#92bf73" points="582.8,344.3 596.8,352.6 586.1,353.4 572.2,346.8"/>
<polygon fill="#15b1b4" points="215.3,404.9 229.2,401.1 218.6,396.6 204.7,400.4"/>
<polygon fill="#4dbc92" points="642.6,374.9 656.5,381.4 645.9,375.6 632.0,368.4"/>
<polygon fill="#71bf80" points="519.8,358.9 533.7,350.1 523.1,347.2 509.2,349.3"/>
<polygon fill="#25b5a9" points="278.4,397.6 292.3,388.7 281.6,388.3 267.7,395.2"/>
<polygon fill="#d9ba56" points="474.0,306.9 487.9,320.8 477.2,313.1 463.3,295.0"/>
<polygon fill="#15b1b4" points="239.9,405.4 253.8,400.7 243.2,396.9 229.2,401.1"/>
<polygon fill="#1db3af" points="702.4,402.3 716.3,400.5 705.6,395.2 691.7,396.2"/>
<polygon fill="#15b1b4" points="727.0,405.7 740.9,402.7 730.2,397.8 716.3,400.5"/>
<polygon fill="#25b5a9" points="677.8,395.4 691.7,396.2 681.1,390.2 667.2,388.1"/>
<polygon fill="#15b1b4" points="176.9,407.6 190.8,404.0 180.1,399.4 166.2,403.0"/>
<polygon fill="#fec832" points="400.3,276.6 414.2,281.5 403.5,305.1 389.6,302.7"/>
<polygon fill="#15b1b4" points="751.5,407.6 765.4,404.1 754.8,399.4 740.9,402.7"/>
<polygon fill="#7cbf7b" points="495.3,353.0 509.2,349.3 498.5,334.8 484.6,328.8"/>
<polygon fill="#aebe67" points="484.6,328.8 498.5,334.8 487.9,320.8 474.0,306.9"/>
<polygon fill="#1db3af" points="264.5,404.4 278.4,397.6 267.7,395.2 253.8,400.7"/>
<polygon fill="#7cbf7b" points="618.1,358.4 632.0,368.4 621.3,363.8 607.4,354.0"/>
<polygon fill="#59bd8c" points="505.9,371.3 519.8,358.9 509.2,349.3 495.3,353.0"/>
<polygon fill="#15b1b4" points="201.4,408.7 215.3,404.9 204.7,400.4 190.8,404.0"/>
<polygon fill="#92bf73" points="544.4,348.9 558.3,344.1 547.6,347.4 533.7,350.1"/>
<polygon fill="#42bb98" points="653.3,383.2 667.2,388.1 656.5,381.4 642.6,374.9"/>
<polygon fill="#15b1b4" points="226.0,409.5 239.9,405.4 229.2,401.1 215.3,404.9"/>
<polygon fill="#42bb98" points="492.0,382.5 505.9,371.3 495.3,353.0 481.4,355.9"/>
<polygon fill="#38b99e" points="302.9,389.1 316.8,374.0 306.2,377.1 292.3,388.7"/>
<polygon fill="#1db3af" points="713.0,408.2 727.0,405.7 716.3,400.5 702.4,402.3"/>
<polygon fill="#71bf80" points="530.5,362.3 544.4,348.9 533.7,350.1 519.8,358.9"/>
<polygon fill="#15b1b4" points="163.0,411.2 176.9,407.6 166.2,403.0 152.3,406.6"/>
<polygon fill="#59bd8c" points="316.8,374.0 330.7,354.8 320.1,362.7 306.2,377.1"/>
<polygon fill="#25b5a9" points="688.5,402.8 702.4,402.3 691.7,396.2 677.8,395.4"/>
<polygon fill="#a5be6b" points="593.5,344.6 607.4,354.0 596.8,352.6 582.8,344.3"/>
<polygon fill="#25b5a9" points="502.7,397.6 516.6,380.8 505.9,371.3 492.0,382.5"/>
<polygon fill="#42bb98" points="516.6,380.8 530.5,362.3 519.8,358.9 505.9,371.3"/>
<polygon fill="#a5be6b" points="568.9,340.8 582.8,344.3 572.2,346.8 558.3,344.1"/>
<polygon fill="#15b1b4" points="250.6,409.6 264.5,404.4 253.8,400.7 239.9,405.4"/>
<polygon fill="#15b1b4" points="737.6,410.8 751.5,407.6 740.9,402.7 727.0,405.7"/>
<polygon fill="#25b5a9" points="289.0,400.2 302.9,389.1 292.3,388.7 278.4,397.6"/>
<polygon fill="#15b1b4" points="187.5,412.3 201.4,408.7 190.8,404.0 176.9,407.6"/>
<polygon fill="#fcce2e" points="449.4,276.6 463.3,295.0 452.6,296.0 438.7,278.1"/>
<polygon fill="#15b1b4" points="488.8,406.8 502.7,397.6 492.0,382.5 478.1,388.4"/>
<polygon fill="#87bf77" points="330.7,354.8 344.6,332.9 334.0,346.4 320.1,362.7"/>
<polygon fill="#15b1b4" points="762.2,412.4 776.1,408.8 765.4,404.1 751.5,407.6"/>
<polygon fill="#fec832" points="386.4,280.0 400.3,276.6 389.6,302.7 375.7,306.3"/>
<polygon fill="#71bf80" points="628.7,366.1 642.6,374.9 632.0,368.4 618.1,358.4"/>
<polygon fill="#38b99e" points="663.9,392.5 677.8,395.4 667.2,388.1 653.3,383.2"/>
<polygon fill="#7cbf7b" points="481.4,355.9 495.3,353.0 484.6,328.8 470.7,322.3"/>
<polygon fill="#15b1b4" points="212.1,413.3 226.0,409.5 215.3,404.9 201.4,408.7"/>
<polygon fill="#f5de21" points="424.8,263.6 438.7,278.1 428.1,292.6 414.2,281.5"/>
<polygon fill="#1db3af" points="275.1,408.1 289.0,400.2 278.4,397.6 264.5,404.4"/>
<polygon fill="#38b99e" points="478.1,388.4 492.0,382.5 481.4,355.9 467.4,356.2"/>
<polygon fill="#b7bd64" points="344.6,332.9 358.6,310.8 347.9,329.9 334.0,346.4"/>
<polygon fill="#1db3af" points="513.3,404.3 527.2,384.5 516.6,380.8 502.7,397.6"/>
<polygon fill="#15b1b4" points="499.4,414.6 513.3,404.3 502.7,397.6 488.8,406.8"/>
<polygon fill="#15b1b4" points="236.6,414.0 250.6,409.6 239.9,405.4 226.0,409.5"/>
<polygon fill="#15b1b4" points="149.1,414.8 163.0,411.2 152.3,406.6 138.4,410.1"/>
<polygon fill="#fdbe3d" points="372.5,292.1 386.4,280.0 375.7,306.3 361.8,315.8"/>
<polygon fill="#1db3af" points="699.1,410.0 713.0,408.2 702.4,402.3 688.5,402.8"/>
<polygon fill="#e1b952" points="358.6,310.8 372.5,292.1 361.8,315.8 347.9,329.9"/>
<polygon fill="#15b1b4" points="723.7,413.9 737.6,410.8 727.0,405.7 713.0,408.2"/>
<polygon fill="#a5be6b" points="555.0,346.5 568.9,340.8 558.3,344.1 544.4,348.9"/>
<polygon fill="#15b1b4" points="173.6,415.9 187.5,412.3 176.9,407.6 163.0,411.2"/>
<polygon fill="#1db3af" points="474.8,407.4 488.8,406.8 478.1,388.4 464.2,388.8"/>
<polygon fill="#c8bc5d" points="470.7,322.3 484.6,328.8 474.0,306.9 460.0,292.4"/>
<polygon fill="#15b1b4" points="748.3,415.8 762.2,412.4 751.5,407.6 737.6,410.8"/>
<polygon fill="#4dbc92" points="527.2,384.5 541.1,362.5 530.5,362.3 516.6,380.8"/>
<polygon fill="#2eb7a4" points="674.6,402.1 688.5,402.8 677.8,395.4 663.9,392.5"/>
<polygon fill="#15b1b4" points="261.2,414.0 275.1,408.1 264.5,404.4 250.6,409.6"/>
<polygon fill="#65be86" points="639.4,376.3 653.3,383.2 642.6,374.9 628.7,366.1"/>
<polygon fill="#fdbe3d" points="460.0,292.4 474.0,306.9 463.3,295.0 449.4,276.6"/>
<polygon fill="#a5be6b" points="604.2,349.0 618.1,358.4 607.4,354.0 593.5,344.6"/>
<polygon fill="#15b1b4" points="198.2,416.9 212.1,413.3 201.4,408.7 187.5,412.3"/>
<polygon fill="#15b1b4" points="772.8,417.1 786.7,413.5 776.1,408.8 762.2,412.4"/>
<polygon fill="#7cbf7b" points="541.1,362.5 555.0,346.5 544.4,348.9 530.5,362.3"/>
<polygon fill="#42bb98" points="313.6,391.2 327.5,373.3 316.8,374.0 302.9,389.1"/>
<polygon fill="#25b5a9" points="299.7,404.0 313.6,391.2 302.9,389.1 289.0,400.2"/>
<polygon fill="#1db3af" points="485.5,413.9 499.4,414.6 488.8,406.8 474.8,407.4"/>
<polygon fill="#15b1b4" points="222.7,417.9 236.6,414.0 226.0,409.5 212.1,413.3"/>
<polygon fill="#b7bd64" points="579.6,340.6 593.5,344.6 582.8,344.3 568.9,340.8"/>
<polygon fill="#42bb98" points="464.2,388.8 478.1,388.4 467.4,356.2 453.5,354.9"/>
<polygon fill="#1db3af" points="285.8,412.7 299.7,404.0 289.0,400.2 275.1,408.1"/>
<polygon fill="#87bf77" points="467.4,356.2 481.4,355.9 470.7,322.3 456.8,315.8"/>
<polygon fill="#65be86" points="327.5,373.3 341.4,350.2 330.7,354.8 316.8,374.0"/>
<polygon fill="#15b1b4" points="510.1,417.6 524.0,408.0 513.3,404.3 499.4,414.6"/>
<polygon fill="#4dbc92" points="650.0,388.3 663.9,392.5 653.3,383.2 639.4,376.3"/>
<polygon fill="#15b1b4" points="709.8,416.7 723.7,413.9 713.0,408.2 699.1,410.0"/>
<polygon fill="#25b5a9" points="524.0,408.0 537.9,387.3 527.2,384.5 513.3,404.3"/>
<polygon fill="#15b1b4" points="159.7,419.5 173.6,415.9 163.0,411.2 149.1,414.8"/>
<polygon fill="#15b1b4" points="247.3,418.6 261.2,414.0 250.6,409.6 236.6,414.0"/>
<polygon fill="#25b5a9" points="685.2,411.4 699.1,410.0 688.5,402.8 674.6,402.1"/>
<polygon fill="#15b1b4" points="734.4,419.2 748.3,415.8 737.6,410.8 723.7,413.9"/>
<polygon fill="#15b1b4" points="184.3,420.6 198.2,416.9 187.5,412.3 173.6,415.9"/>
<polygon fill="#9cbf6f" points="614.8,357.7 628.7,366.1 618.1,358.4 604.2,349.0"/>
<polygon fill="#15b1b4" points="758.9,420.7 772.8,417.1 762.2,412.4 748.3,415.8"/>
<polygon fill="#2eb7a4" points="460.9,404.5 474.8,407.4 464.2,388.8 450.3,388.0"/>
<polygon fill="#15b1b4" points="271.9,418.8 285.8,412.7 275.1,408.1 261.2,414.0"/>
<polygon fill="#f5eb18" points="410.9,256.7 424.8,263.6 414.2,281.5 400.3,276.6"/>
<polygon fill="#a5be6b" points="341.4,350.2 355.3,323.5 344.6,332.9 330.7,354.8"/>
<polygon fill="#15b1b4" points="208.8,421.6 222.7,417.9 212.1,413.3 198.2,416.9"/>
<polygon fill="#4dbc92" points="537.9,387.3 551.8,363.8 541.1,362.5 527.2,384.5"/>
<polygon fill="#15b1b4" points="783.5,421.8 797.4,418.2 786.7,413.5 772.8,417.1"/>
<polygon fill="#38b99e" points="660.7,400.9 674.6,402.1 663.9,392.5 650.0,388.3"/>
<polygon fill="#25b5a9" points="310.3,410.4 324.2,397.5 313.6,391.2 299.7,404.0"/>
<polygon fill="#38b99e" points="324.2,397.5 338.1,378.6 327.5,373.3 313.6,391.2"/>
<polygon fill="#25b5a9" points="496.2,414.7 510.1,417.6 499.4,414.6 485.5,413.9"/>
<polygon fill="#aebe67" points="565.7,346.6 579.6,340.6 568.9,340.8 555.0,346.5"/>
<polygon fill="#f5e41d" points="435.5,261.4 449.4,276.6 438.7,278.1 424.8,263.6"/>
<polygon fill="#15b1b4" points="233.4,422.6 247.3,418.6 236.6,414.0 222.7,417.9"/>
<polygon fill="#4dbc92" points="450.3,388.0 464.2,388.8 453.5,354.9 439.6,355.6"/>
<polygon fill="#1db3af" points="296.4,418.9 310.3,410.4 299.7,404.0 285.8,412.7"/>
<polygon fill="#2eb7a4" points="471.6,408.5 485.5,413.9 474.8,407.4 460.9,404.5"/>
<polygon fill="#1db3af" points="695.9,419.6 709.8,416.7 699.1,410.0 685.2,411.4"/>
<polygon fill="#352a87" points="595.3,564.4 609.2,549.8 598.5,532.0 584.6,543.2"/>
<polygon fill="#87bf77" points="551.8,363.8 565.7,346.6 555.0,346.5 541.1,362.5"/>
<polygon fill="#15b1b4" points="720.4,422.7 734.4,419.2 723.7,413.9 709.8,416.7"/>
<polygon fill="#b7bd64" points="590.2,345.1 604.2,349.0 593.5,344.6 579.6,340.6"/>
<polygon fill="#87bf77" points="625.5,370.0 639.4,376.3 628.7,366.1 614.8,357.7"/>
<polygon fill="#15b1b4" points="170.4,424.2 184.3,420.6 173.6,415.9 159.7,419.5"/>
<polygon fill="#15b1b4" points="258.0,423.4 271.9,418.8 261.2,414.0 247.3,418.6"/>
<polygon fill="#e1b952" points="456.8,315.8 470.7,322.3 460.0,292.4 446.1,280.1"/>
<polygon fill="#1389d3" points="391.4,474.7 405.3,458.5 394.7,442.7 380.8,458.0"/>
<polygon fill="#1db3af" points="520.7,418.9 534.6,411.3 524.0,408.0 510.1,417.6"/>
<polygon fill="#15b1b4" points="745.0,424.2 758.9,420.7 748.3,415.8 734.4,419.2"/>
<polygon fill="#25b5a9" points="534.6,411.3 548.5,391.6 537.9,387.3 524.0,408.0"/>
<polygon fill="#25b5a9" points="671.3,413.1 685.2,411.4 674.6,402.1 660.7,400.9"/>
<polygon fill="#9cbf6f" points="453.5,354.9 467.4,356.2 456.8,315.8 442.9,311.8"/>
<polygon fill="#0998d1" points="380.8,458.0 394.7,442.7 384.0,419.1 370.1,436.0"/>
<polygon fill="#3637a0" points="609.2,549.8 623.1,525.8 612.4,510.1 598.5,532.0"/>
<polygon fill="#65be86" points="338.1,378.6 352.0,353.7 341.4,350.2 327.5,373.3"/>
<polygon fill="#d9ba56" points="355.3,323.5 369.2,296.6 358.6,310.8 344.6,332.9"/>
<polygon fill="#0c93d2" points="366.8,465.7 380.8,458.0 370.1,436.0 356.2,446.3"/>
<polygon fill="#1485d4" points="377.5,481.9 391.4,474.7 380.8,458.0 366.8,465.7"/>
<polygon fill="#15b1b4" points="194.9,425.2 208.8,421.6 198.2,416.9 184.3,420.6"/>
<polygon fill="#15b1b4" points="321.0,420.5 334.9,409.3 324.2,397.5 310.3,410.4"/>
<polygon fill="#15b1b4" points="769.6,425.4 783.5,421.8 772.8,417.1 758.9,420.7"/>
<polygon fill="#2eb7a4" points="447.0,406.2 460.9,404.5 450.3,388.0 436.4,391.9"/>
<polygon fill="#15b1b4" points="282.5,424.5 296.4,418.9 285.8,412.7 271.9,418.8"/>
<polygon fill="#25b5a9" points="334.9,409.3 348.8,391.9 338.1,378.6 324.2,397.5"/>
<polygon fill="#079ccf" points="405.3,458.5 419.2,437.0 408.6,422.7 394.7,442.7"/>
<polygon fill="#65be86" points="636.1,384.9 650.0,388.3 639.4,376.3 625.5,370.0"/>
<polygon fill="#06a7c6" points="394.7,442.7 408.6,422.7 397.9,397.9 384.0,419.1"/>
<polygon fill="#06a4ca" points="356.2,446.3 370.1,436.0 359.4,412.4 345.5,426.3"/>
<polygon fill="#2053d4" points="598.5,532.0 612.4,510.1 601.8,482.8 587.9,500.4"/>
<polygon fill="#3243ba" points="584.6,543.2 598.5,532.0 587.9,500.4 574.0,506.7"/>
<polygon fill="#352a87" points="581.4,565.4 595.3,564.4 584.6,543.2 570.7,540.2"/>
<polygon fill="#352a87" points="605.9,565.5 619.8,550.3 609.2,549.8 595.3,564.4"/>
<polygon fill="#15b1b4" points="219.5,426.3 233.4,422.6 222.7,417.9 208.8,421.6"/>
<polygon fill="#fad32a" points="446.1,280.1 460.0,292.4 449.4,276.6 435.5,261.4"/>
<polygon fill="#1485d4" points="402.1,484.6 416.0,465.8 405.3,458.5 391.4,474.7"/>
<polygon fill="#07a9c2" points="370.1,436.0 384.0,419.1 373.4,391.9 359.4,412.4"/>
<polygon fill="#15b1b4" points="794.1,426.5 808.0,422.9 797.4,418.2 783.5,421.8"/>
<polygon fill="#f5eb18" points="397.0,260.0 410.9,256.7 400.3,276.6 386.4,280.0"/>
<polygon fill="#0faeb9" points="345.5,426.3 359.4,412.4 348.8,391.9 334.9,409.3"/>
<polygon fill="#15b1b4" points="307.1,427.3 321.0,420.5 310.3,410.4 296.4,418.9"/>
<polygon fill="#1481d6" points="388.2,493.0 402.1,484.6 391.4,474.7 377.5,481.9"/>
<polygon fill="#4dbc92" points="548.5,391.6 562.4,368.4 551.8,363.8 537.9,387.3"/>
<polygon fill="#4dbc92" points="436.4,391.9 450.3,388.0 439.6,355.6 425.7,362.5"/>
<polygon fill="#0aacbe" points="331.6,434.3 345.5,426.3 334.9,409.3 321.0,420.5"/>
<polygon fill="#15b1b4" points="706.5,426.7 720.4,422.7 709.8,416.7 695.9,419.6"/>
<polygon fill="#1db3af" points="682.0,423.7 695.9,419.6 685.2,411.4 671.3,413.1"/>
<polygon fill="#42bb98" points="646.8,401.1 660.7,400.9 650.0,388.3 636.1,384.9"/>
<polygon fill="#15b1b4" points="244.0,427.4 258.0,423.4 247.3,418.6 233.4,422.6"/>
<polygon fill="#07a9c2" points="419.2,437.0 433.1,417.4 422.5,404.0 408.6,422.7"/>
<polygon fill="#a5be6b" points="600.9,354.5 614.8,357.7 604.2,349.0 590.2,345.1"/>
<polygon fill="#ffc337" points="369.2,296.6 383.1,274.0 372.5,292.1 358.6,310.8"/>
<polygon fill="#06a4ca" points="342.3,450.3 356.2,446.3 345.5,426.3 331.6,434.3"/>
<polygon fill="#1db3af" points="433.1,417.4 447.0,406.2 436.4,391.9 422.5,404.0"/>
<polygon fill="#15b1b4" points="408.6,422.7 422.5,404.0 411.8,377.4 397.9,397.9"/>
<polygon fill="#353dad" points="619.8,550.3 633.8,527.2 623.1,525.8 609.2,549.8"/>
<polygon fill="#4dbc92" points="348.8,391.9 362.7,368.2 352.0,353.7 338.1,378.6"/>
<polygon fill="#15b1b4" points="731.1,428.1 745.0,424.2 734.4,419.2 720.4,422.7"/>
<polygon fill="#aebe67" points="576.3,351.2 590.2,345.1 579.6,340.6 565.7,346.6"/>
<polygon fill="#0998d1" points="352.9,466.5 366.8,465.7 356.2,446.3 342.3,450.3"/>
<polygon fill="#25b5a9" points="359.4,412.4 373.4,391.9 362.7,368.2 348.8,391.9"/>
<polygon fill="#352a87" points="592.0,569.2 605.9,565.5 595.3,564.4 581.4,565.4"/>
<polygon fill="#0363e1" points="623.1,525.8 637.0,498.4 626.4,484.1 612.4,510.1"/>
<polygon fill="#0998d1" points="416.0,465.8 429.9,441.2 419.2,437.0 405.3,458.5"/>
<polygon fill="#2eb7a4" points="506.8,413.2 520.7,418.9 510.1,417.6 496.2,414.7"/>
<polygon fill="#15b1b4" points="384.0,419.1 397.9,397.9 387.3,367.3 373.4,391.9"/>
<polygon fill="#f5de21" points="383.1,274.0 397.0,260.0 386.4,280.0 372.5,292.1"/>
<polygon fill="#15b1b4" points="268.6,428.7 282.5,424.5 271.9,418.8 258.0,423.4"/>
<polygon fill="#a5be6b" points="352.0,353.7 366.0,324.7 355.3,323.5 341.4,350.2"/>
<polygon fill="#38b99e" points="457.7,408.3 471.6,408.5 460.9,404.5 447.0,406.2"/>
<polygon fill="#38b99e" points="422.5,404.0 436.4,391.9 425.7,362.5 411.8,377.4"/>
<polygon fill="#0871de" points="612.4,510.1 626.4,484.1 615.7,460.5 601.8,482.8"/>
<polygon fill="#108ed2" points="363.6,480.8 377.5,481.9 366.8,465.7 352.9,466.5"/>
<polygon fill="#42bb98" points="482.2,406.5 496.2,414.7 485.5,413.9 471.6,408.5"/>
<polygon fill="#15b1b4" points="181.0,428.8 194.9,425.2 184.3,420.6 170.4,424.2"/>
<polygon fill="#25b5a9" points="657.4,417.0 671.3,413.1 660.7,400.9 646.8,401.1"/>
<polygon fill="#87bf77" points="562.4,368.4 576.3,351.2 565.7,346.6 551.8,363.8"/>
<polygon fill="#15b1b4" points="755.7,429.1 769.6,425.4 758.9,420.7 745.0,424.2"/>
<polygon fill="#25b5a9" points="545.3,415.0 559.2,398.0 548.5,391.6 534.6,411.3"/>
<polygon fill="#0aacbe" points="317.7,438.1 331.6,434.3 321.0,420.5 307.1,427.3"/>
<polygon fill="#0faeb9" points="293.2,431.5 307.1,427.3 296.4,418.9 282.5,424.5"/>
<polygon fill="#9cbf6f" points="439.6,355.6 453.5,354.9 442.9,311.8 429.0,313.6"/>
<polygon fill="#15b1b4" points="205.6,429.9 219.5,426.3 208.8,421.6 194.9,425.2"/>
<polygon fill="#25b5a9" points="531.4,419.7 545.3,415.0 534.6,411.3 520.7,418.9"/>
<polygon fill="#15b1b4" points="780.2,430.1 794.1,426.5 783.5,421.8 769.6,425.4"/>
<polygon fill="#92bf73" points="611.6,368.3 625.5,370.0 614.8,357.7 600.9,354.5"/>
<polygon fill="#1079da" points="587.9,500.4 601.8,482.8 591.1,451.8 577.2,465.4"/>
<polygon fill="#2053d4" points="570.7,540.2 584.6,543.2 574.0,506.7 560.1,499.1"/>
<polygon fill="#1485d4" points="374.2,491.6 388.2,493.0 377.5,481.9 363.6,480.8"/>
<polygon fill="#15b1b4" points="692.6,432.2 706.5,426.7 695.9,419.6 682.0,423.7"/>
<polygon fill="#15b1b4" points="668.1,430.5 682.0,423.7 671.3,413.1 657.4,417.0"/>
<polygon fill="#1481d6" points="398.8,497.7 412.7,487.1 402.1,484.6 388.2,493.0"/>
<polygon fill="#07a9c2" points="429.9,441.2 443.8,419.6 433.1,417.4 419.2,437.0"/>
<polygon fill="#15b1b4" points="230.1,431.0 244.0,427.4 233.4,422.6 219.5,426.3"/>
<polygon fill="#1389d3" points="412.7,487.1 426.6,465.4 416.0,465.8 402.1,484.6"/>
<polygon fill="#4dbc92" points="559.2,398.0 573.1,376.9 562.4,368.4 548.5,391.6"/>
<polygon fill="#15b1b4" points="804.8,431.2 818.7,427.6 808.0,422.9 794.1,426.5"/>
<polygon fill="#f9fb0e" points="421.6,253.8 435.5,261.4 424.8,263.6 410.9,256.7"/>
<polygon fill="#06a7c6" points="328.4,450.4 342.3,450.3 331.6,434.3 317.7,438.1"/>
<polygon fill="#42bb98" points="397.9,397.9 411.8,377.4 401.2,343.0 387.3,367.3"/>
<polygon fill="#25b5a9" points="443.8,419.6 457.7,408.3 447.0,406.2 433.1,417.4"/>
<polygon fill="#4dbc92" points="373.4,391.9 387.3,367.3 376.6,340.2 362.7,368.2"/>
<polygon fill="#71bf80" points="622.2,385.7 636.1,384.9 625.5,370.0 611.6,368.3"/>
<polygon fill="#f1b94a" points="442.9,311.8 456.8,315.8 446.1,280.1 432.2,273.6"/>
<polygon fill="#15b1b4" points="717.2,432.5 731.1,428.1 720.4,422.7 706.5,426.7"/>
<polygon fill="#0268e1" points="633.8,527.2 647.7,501.7 637.0,498.4 623.1,525.8"/>
<polygon fill="#1389d3" points="601.8,482.8 615.7,460.5 605.0,433.1 591.1,451.8"/>
<polygon fill="#1485d4" points="626.4,484.1 640.3,460.3 629.6,440.0 615.7,460.5"/>
<polygon fill="#0d75dc" points="574.0,506.7 587.9,500.4 577.2,465.4 563.3,467.4"/>
<polygon fill="#127dd8" points="637.0,498.4 650.9,473.4 640.3,460.3 626.4,484.1"/>
<polygon fill="#a5be6b" points="587.0,360.7 600.9,354.5 590.2,345.1 576.3,351.2"/>
<polygon fill="#87bf77" points="362.7,368.2 376.6,340.2 366.0,324.7 352.0,353.7"/>
<polygon fill="#42bb98" points="632.9,405.5 646.8,401.1 636.1,384.9 622.2,385.7"/>
<polygon fill="#15b1b4" points="254.7,432.4 268.6,428.7 258.0,423.4 244.0,427.4"/>
<polygon fill="#1db3af" points="643.5,425.4 657.4,417.0 646.8,401.1 632.9,405.5"/>
<polygon fill="#15b1b4" points="741.8,433.0 755.7,429.1 745.0,424.2 731.1,428.1"/>
<polygon fill="#92bf73" points="425.7,362.5 439.6,355.6 429.0,313.6 415.1,324.0"/>
<polygon fill="#06a0cd" points="339.0,463.2 352.9,466.5 342.3,450.3 328.4,450.4"/>
<polygon fill="#15b1b4" points="279.3,434.7 293.2,431.5 282.5,424.5 268.6,428.7"/>
<polygon fill="#0aacbe" points="303.8,439.9 317.7,438.1 307.1,427.3 293.2,431.5"/>
<polygon fill="#7cbf7b" points="573.1,376.9 587.0,360.7 576.3,351.2 562.4,368.4"/>
<polygon fill="#0aacbe" points="654.2,442.2 668.1,430.5 657.4,417.0 643.5,425.4"/>
<polygon fill="#25b5a9" points="555.9,422.1 569.8,408.2 559.2,398.0 545.3,415.0"/>
<polygon fill="#7cbf7b" points="411.8,377.4 425.7,362.5 415.1,324.0 401.2,343.0"/>
<polygon fill="#e1b952" points="366.0,324.7 379.9,295.5 369.2,296.6 355.3,323.5"/>
<polygon fill="#06a0cd" points="640.3,460.3 654.2,442.2 643.5,425.4 629.6,440.0"/>
<polygon fill="#079ccf" points="615.7,460.5 629.6,440.0 619.0,416.3 605.0,433.1"/>
<polygon fill="#0aacbe" points="678.7,440.6 692.6,432.2 682.0,423.7 668.1,430.5"/>
<polygon fill="#15b1b4" points="191.7,433.5 205.6,429.9 194.9,425.2 181.0,428.8"/>
<polygon fill="#3243ba" points="567.5,553.2 581.4,565.4 570.7,540.2 556.8,524.4"/>
<polygon fill="#15b1b4" points="766.3,433.8 780.2,430.1 769.6,425.4 755.7,429.1"/>
<polygon fill="#0aacbe" points="629.6,440.0 643.5,425.4 632.9,405.5 619.0,416.3"/>
<polygon fill="#079ccf" points="426.6,465.4 440.5,438.1 429.9,441.2 416.0,465.8"/>
<polygon fill="#079ccf" points="577.2,465.4 591.1,451.8 580.5,425.6 566.6,437.8"/>
<polygon fill="#1485d4" points="384.9,497.4 398.8,497.7 388.2,493.0 374.2,491.6"/>
<polygon fill="#38b99e" points="569.8,408.2 583.7,389.6 573.1,376.9 559.2,398.0"/>
<polygon fill="#87bf77" points="597.6,374.7 611.6,368.3 600.9,354.5 587.0,360.7"/>
<polygon fill="#3243ba" points="578.1,560.8 592.0,569.2 581.4,565.4 567.5,553.2"/>
<polygon fill="#0998d1" points="349.7,475.1 363.6,480.8 352.9,466.5 339.0,463.2"/>
<polygon fill="#0998d1" points="650.9,473.4 664.8,453.9 654.2,442.2 640.3,460.3"/>
<polygon fill="#06a4ca" points="591.1,451.8 605.0,433.1 594.4,408.3 580.5,425.6"/>
<polygon fill="#15b1b4" points="216.2,434.6 230.1,431.0 219.5,426.3 205.6,429.9"/>
<polygon fill="#0faeb9" points="703.3,438.4 717.2,432.5 706.5,426.7 692.6,432.2"/>
<polygon fill="#2c4ac7" points="616.6,551.1 630.5,537.5 619.8,550.3 605.9,565.5"/>
<polygon fill="#f5de21" points="432.2,273.6 446.1,280.1 435.5,261.4 421.6,253.8"/>
<polygon fill="#15b1b4" points="790.9,434.8 804.8,431.2 794.1,426.5 780.2,430.1"/>
<polygon fill="#2eb7a4" points="619.0,416.3 632.9,405.5 622.2,385.7 608.3,393.5"/>
<polygon fill="#06a7c6" points="664.8,453.9 678.7,440.6 668.1,430.5 654.2,442.2"/>
<polygon fill="#25b5a9" points="542.0,423.7 555.9,422.1 545.3,415.0 531.4,419.7"/>
<polygon fill="#42bb98" points="517.5,410.9 531.4,419.7 520.7,418.9 506.8,413.2"/>
<polygon fill="#4dbc92" points="468.3,404.1 482.2,406.5 471.6,408.5 457.7,408.3"/>
<polygon fill="#65be86" points="608.3,393.5 622.2,385.7 611.6,368.3 597.6,374.7"/>
<polygon fill="#0faeb9" points="566.6,437.8 580.5,425.6 569.8,408.2 555.9,422.1"/>
<polygon fill="#127dd8" points="647.7,501.7 661.6,478.5 650.9,473.4 637.0,498.4"/>
<polygon fill="#0faeb9" points="605.0,433.1 619.0,416.3 608.3,393.5 594.4,408.3"/>
<polygon fill="#65be86" points="583.7,389.6 597.6,374.7 587.0,360.7 573.1,376.9"/>
<polygon fill="#92bf73" points="387.3,367.3 401.2,343.0 390.5,312.2 376.6,340.2"/>
<polygon fill="#1db3af" points="580.5,425.6 594.4,408.3 583.7,389.6 569.8,408.2"/>
<polygon fill="#15b1b4" points="240.8,435.9 254.7,432.4 244.0,427.4 230.1,431.0"/>
<polygon fill="#59bd8c" points="492.9,401.9 506.8,413.2 496.2,414.7 482.2,406.5"/>
<polygon fill="#07a9c2" points="314.5,449.4 328.4,450.4 317.7,438.1 303.8,439.9"/>
<polygon fill="#0363e1" points="630.5,537.5 644.4,518.1 633.8,527.2 619.8,550.3"/>
<polygon fill="#15b1b4" points="815.4,435.9 829.3,432.3 818.7,427.6 804.8,431.2"/>
<polygon fill="#15b1b4" points="727.8,437.4 741.8,433.0 731.1,428.1 717.2,432.5"/>
<polygon fill="#42bb98" points="594.4,408.3 608.3,393.5 597.6,374.7 583.7,389.6"/>
<polygon fill="#2c4ac7" points="602.7,555.9 616.6,551.1 605.9,565.5 592.0,569.2"/>
<polygon fill="#15b1b4" points="265.4,437.7 279.3,434.7 268.6,428.7 254.7,432.4"/>
<polygon fill="#079ccf" points="563.3,467.4 577.2,465.4 566.6,437.8 552.7,438.2"/>
<polygon fill="#f9fb0e" points="407.7,256.8 421.6,253.8 410.9,256.7 397.0,260.0"/>
<polygon fill="#0c93d2" points="360.3,484.6 374.2,491.6 363.6,480.8 349.7,475.1"/>
<polygon fill="#0faeb9" points="289.9,441.5 303.8,439.9 293.2,431.5 279.3,434.7"/>
<polygon fill="#c8bc5d" points="376.6,340.2 390.5,312.2 379.9,295.5 366.0,324.7"/>
<polygon fill="#f1b94a" points="429.0,313.6 442.9,311.8 432.2,273.6 418.3,276.1"/>
<polygon fill="#0aacbe" points="689.4,447.2 703.3,438.4 692.6,432.2 678.7,440.6"/>
<polygon fill="#fec832" points="379.9,295.5 393.8,271.4 383.1,274.0 369.2,296.6"/>
<polygon fill="#1389d3" points="409.5,495.4 423.4,482.1 412.7,487.1 398.8,497.7"/>
<polygon fill="#15b1b4" points="752.4,437.6 766.3,433.8 755.7,429.1 741.8,433.0"/>
<polygon fill="#0faeb9" points="440.5,438.1 454.4,414.9 443.8,419.6 429.9,441.2"/>
<polygon fill="#1481d6" points="560.1,499.1 574.0,506.7 563.3,467.4 549.4,456.2"/>
<polygon fill="#0c93d2" points="661.6,478.5 675.5,460.2 664.8,453.9 650.9,473.4"/>
<polygon fill="#15b1b4" points="552.7,438.2 566.6,437.8 555.9,422.1 542.0,423.7"/>
<polygon fill="#42bb98" points="454.4,414.9 468.3,404.1 457.7,408.3 443.8,419.6"/>
<polygon fill="#0c93d2" points="423.4,482.1 437.3,458.0 426.6,465.4 412.7,487.1"/>
<polygon fill="#15b1b4" points="202.3,438.2 216.2,434.6 205.6,429.9 191.7,433.5"/>
<polygon fill="#06a4ca" points="675.5,460.2 689.4,447.2 678.7,440.6 664.8,453.9"/>
<polygon fill="#06a7c6" points="325.1,459.2 339.0,463.2 328.4,450.4 314.5,449.4"/>
<polygon fill="#15b1b4" points="777.0,438.4 790.9,434.8 780.2,430.1 766.3,433.8"/>
<polygon fill="#0d75dc" points="644.4,518.1 658.3,497.0 647.7,501.7 633.8,527.2"/>
<polygon fill="#f5eb18" points="393.8,271.4 407.7,256.8 397.0,260.0 383.1,274.0"/>
<polygon fill="#c0bc60" points="401.2,343.0 415.1,324.0 404.4,289.5 390.5,312.2"/>
<polygon fill="#0871de" points="556.8,524.4 570.7,540.2 560.1,499.1 546.2,480.7"/>
<polygon fill="#0faeb9" points="713.9,443.2 727.8,437.4 717.2,432.5 703.3,438.4"/>
<polygon fill="#15b1b4" points="226.9,439.4 240.8,435.9 230.1,431.0 216.2,434.6"/>
<polygon fill="#e1b952" points="415.1,324.0 429.0,313.6 418.3,276.1 404.4,289.5"/>
<polygon fill="#15b1b4" points="801.5,439.5 815.4,435.9 804.8,431.2 790.9,434.8"/>
<polygon fill="#1389d3" points="395.6,497.6 409.5,495.4 398.8,497.7 384.9,497.4"/>
<polygon fill="#15b1b4" points="251.4,440.9 265.4,437.7 254.7,432.4 240.8,435.9"/>
<polygon fill="#f5e41d" points="418.3,276.1 432.2,273.6 421.6,253.8 407.7,256.8"/>
<polygon fill="#108ed2" points="371.0,490.7 384.9,497.4 374.2,491.6 360.3,484.6"/>
<polygon fill="#0aacbe" points="300.6,448.8 314.5,449.4 303.8,439.9 289.9,441.5"/>
<polygon fill="#15b1b4" points="826.1,440.5 840.0,436.9 829.3,432.3 815.4,435.9"/>
<polygon fill="#15b1b4" points="738.5,441.9 752.4,437.6 741.8,433.0 727.8,437.4"/>
<polygon fill="#f8bb44" points="390.5,312.2 404.4,289.5 393.8,271.4 379.9,295.5"/>
<polygon fill="#0faeb9" points="276.0,443.4 289.9,441.5 279.3,434.7 265.4,437.7"/>
<polygon fill="#06a4ca" points="335.8,468.5 349.7,475.1 339.0,463.2 325.1,459.2"/>
<polygon fill="#4dbc92" points="528.1,412.3 542.0,423.7 531.4,419.7 517.5,410.9"/>
<polygon fill="#1389d3" points="658.3,497.0 672.2,477.8 661.6,478.5 647.7,501.7"/>
<polygon fill="#0aacbe" points="700.0,451.1 713.9,443.2 703.3,438.4 689.4,447.2"/>
<polygon fill="#0f5cdd" points="588.8,551.2 602.7,555.9 592.0,569.2 578.1,560.8"/>
<polygon fill="#06a7c6" points="437.3,458.0 451.2,429.2 440.5,438.1 426.6,465.4"/>
<polygon fill="#15b1b4" points="763.1,442.2 777.0,438.4 766.3,433.8 752.4,437.6"/>
<polygon fill="#fad32a" points="404.4,289.5 418.3,276.1 407.7,256.8 393.8,271.4"/>
<polygon fill="#7cbf7b" points="479.0,396.7 492.9,401.9 482.2,406.5 468.3,404.1"/>
<polygon fill="#079ccf" points="672.2,477.8 686.1,462.4 675.5,460.2 661.6,478.5"/>
<polygon fill="#15b1b4" points="213.0,442.9 226.9,439.4 216.2,434.6 202.3,438.2"/>
<polygon fill="#06a7c6" points="686.1,462.4 700.0,451.1 689.4,447.2 675.5,460.2"/>
<polygon fill="#7cbf7b" points="503.6,396.4 517.5,410.9 506.8,413.2 492.9,401.9"/>
<polygon fill="#15b1b4" points="787.6,443.1 801.5,439.5 790.9,434.8 777.0,438.4"/>
<polygon fill="#07a9c2" points="549.4,456.2 563.3,467.4 552.7,438.2 538.8,425.7"/>
<polygon fill="#0aacbe" points="311.2,456.4 325.1,459.2 314.5,449.4 300.6,448.8"/>
<polygon fill="#0faeb9" points="724.6,447.1 738.5,441.9 727.8,437.4 713.9,443.2"/>
<polygon fill="#06a0cd" points="346.4,476.5 360.3,484.6 349.7,475.1 335.8,468.5"/>
<polygon fill="#15b1b4" points="237.5,444.2 251.4,440.9 240.8,435.9 226.9,439.4"/>
<polygon fill="#0268e1" points="564.2,543.8 578.1,560.8 567.5,553.2 553.6,532.3"/>
<polygon fill="#15b1b4" points="812.2,444.1 826.1,440.5 815.4,435.9 801.5,439.5"/>
<polygon fill="#38b99e" points="538.8,425.7 552.7,438.2 542.0,423.7 528.1,412.3"/>
<polygon fill="#0871de" points="553.6,532.3 567.5,553.2 556.8,524.4 542.9,501.9"/>
<polygon fill="#15b1b4" points="262.1,446.0 276.0,443.4 265.4,437.7 251.4,440.9"/>
<polygon fill="#0faeb9" points="286.7,449.5 300.6,448.8 289.9,441.5 276.0,443.4"/>
<polygon fill="#15b1b4" points="836.7,445.2 850.6,441.6 840.0,436.9 826.1,440.5"/>
<polygon fill="#0c93d2" points="381.6,492.7 395.6,497.6 384.9,497.4 371.0,490.7"/>
<polygon fill="#15b1b4" points="749.2,446.2 763.1,442.2 752.4,437.6 738.5,441.9"/>
<polygon fill="#0998d1" points="420.1,486.9 434.0,470.7 423.4,482.1 409.5,495.4"/>
<polygon fill="#2eb7a4" points="451.2,429.2 465.1,406.0 454.4,414.9 440.5,438.1"/>
<polygon fill="#0d75dc" points="627.2,530.4 641.2,519.6 630.5,537.5 616.6,551.1"/>
<polygon fill="#0aacbe" points="710.7,453.8 724.6,447.1 713.9,443.2 700.0,451.1"/>
<polygon fill="#65be86" points="465.1,406.0 479.0,396.7 468.3,404.1 454.4,414.9"/>
<polygon fill="#127dd8" points="641.2,519.6 655.1,504.9 644.4,518.1 630.5,537.5"/>
<polygon fill="#15b1b4" points="773.7,446.8 787.6,443.1 777.0,438.4 763.1,442.2"/>
<polygon fill="#079ccf" points="546.2,480.7 560.1,499.1 549.4,456.2 535.5,436.7"/>
<polygon fill="#07a9c2" points="321.9,463.8 335.8,468.5 325.1,459.2 311.2,456.4"/>
<polygon fill="#0c93d2" points="406.2,492.5 420.1,486.9 409.5,495.4 395.6,497.6"/>
<polygon fill="#06a4ca" points="434.0,470.7 447.9,445.0 437.3,458.0 423.4,482.1"/>
<polygon fill="#15b1b4" points="223.6,447.6 237.5,444.2 226.9,439.4 213.0,442.9"/>
<polygon fill="#06a0cd" points="357.1,482.4 371.0,490.7 360.3,484.6 346.4,476.5"/>
<polygon fill="#1389d3" points="655.1,504.9 669.0,489.1 658.3,497.0 644.4,518.1"/>
<polygon fill="#15b1b4" points="798.3,447.7 812.2,444.1 801.5,439.5 787.6,443.1"/>
<polygon fill="#07a9c2" points="696.8,462.8 710.7,453.8 700.0,451.1 686.1,462.4"/>
<polygon fill="#0d75dc" points="613.3,535.3 627.2,530.4 616.6,551.1 602.7,555.9"/>
<polygon fill="#15b1b4" points="248.2,449.0 262.1,446.0 251.4,440.9 237.5,444.2"/>
<polygon fill="#15b1b4" points="735.2,450.8 749.2,446.2 738.5,441.9 724.6,447.1"/>
<polygon fill="#0faeb9" points="297.3,455.6 311.2,456.4 300.6,448.8 286.7,449.5"/>
<polygon fill="#0998d1" points="669.0,489.1 682.9,474.7 672.2,477.8 658.3,497.0"/>
<polygon fill="#15b1b4" points="822.8,448.8 836.7,445.2 826.1,440.5 812.2,444.1"/>
<polygon fill="#15b1b4" points="272.8,451.3 286.7,449.5 276.0,443.4 262.1,446.0"/>
<polygon fill="#06a4ca" points="682.9,474.7 696.8,462.8 686.1,462.4 672.2,477.8"/>
<polygon fill="#0871de" points="574.9,539.2 588.8,551.2 578.1,560.8 564.2,543.8"/>
<polygon fill="#92bf73" points="514.2,395.1 528.1,412.3 517.5,410.9 503.6,396.4"/>
<polygon fill="#15b1b4" points="759.8,450.6 773.7,446.8 763.1,442.2 749.2,446.2"/>
<polygon fill="#1389d3" points="542.9,501.9 556.8,524.4 546.2,480.7 532.3,459.2"/>
<polygon fill="#06a7c6" points="332.5,470.5 346.4,476.5 335.8,468.5 321.9,463.8"/>
<polygon fill="#9cbf6f" points="489.6,388.1 503.6,396.4 492.9,401.9 479.0,396.7"/>
<polygon fill="#15b1b4" points="784.4,451.4 798.3,447.7 787.6,443.1 773.7,446.8"/>
<polygon fill="#0faeb9" points="721.3,456.4 735.2,450.8 724.6,447.1 710.7,453.8"/>
<polygon fill="#1db3af" points="447.9,445.0 461.8,416.3 451.2,429.2 437.3,458.0"/>
<polygon fill="#079ccf" points="392.3,490.9 406.2,492.5 395.6,497.6 381.6,492.7"/>
<polygon fill="#15b1b4" points="234.3,452.4 248.2,449.0 237.5,444.2 223.6,447.6"/>
<polygon fill="#06a0cd" points="367.7,485.6 381.6,492.7 371.0,490.7 357.1,482.4"/>
<polygon fill="#15b1b4" points="808.9,452.4 822.8,448.8 812.2,444.1 798.3,447.7"/>
<polygon fill="#0aacbe" points="308.0,461.7 321.9,463.8 311.2,456.4 297.3,455.6"/>
<polygon fill="#1079da" points="599.4,533.6 613.3,535.3 602.7,555.9 588.8,551.2"/>
<polygon fill="#15b1b4" points="258.8,454.0 272.8,451.3 262.1,446.0 248.2,449.0"/>
<polygon fill="#2eb7a4" points="535.5,436.7 549.4,456.2 538.8,425.7 524.9,406.6"/>
<polygon fill="#0faeb9" points="283.4,456.7 297.3,455.6 286.7,449.5 272.8,451.3"/>
<polygon fill="#15b1b4" points="745.9,454.7 759.8,450.6 749.2,446.2 735.2,450.8"/>
<polygon fill="#0aacbe" points="707.4,463.3 721.3,456.4 710.7,453.8 696.8,462.8"/>
<polygon fill="#7cbf7b" points="524.9,406.6 538.8,425.7 528.1,412.3 514.2,395.1"/>
<polygon fill="#06a7c6" points="343.2,476.0 357.1,482.4 346.4,476.5 332.5,470.5"/>
<polygon fill="#15b1b4" points="770.5,455.1 784.4,451.4 773.7,446.8 759.8,450.6"/>
<polygon fill="#65be86" points="461.8,416.3 475.7,394.8 465.1,406.0 451.2,429.2"/>
<polygon fill="#1481d6" points="550.3,523.6 564.2,543.8 553.6,532.3 539.7,509.6"/>
<polygon fill="#06a7c6" points="430.8,475.2 444.7,456.7 434.0,470.7 420.1,486.9"/>
<polygon fill="#92bf73" points="475.7,394.8 489.6,388.1 479.0,396.7 465.1,406.0"/>
<polygon fill="#07a9c2" points="693.5,471.9 707.4,463.3 696.8,462.8 682.9,474.7"/>
<polygon fill="#15b1b4" points="795.0,456.0 808.9,452.4 798.3,447.7 784.4,451.4"/>
<polygon fill="#06a4ca" points="416.9,484.5 430.8,475.2 420.1,486.9 406.2,492.5"/>
<polygon fill="#108ed2" points="539.7,509.6 553.6,532.3 542.9,501.9 529.0,480.7"/>
<polygon fill="#0faeb9" points="732.0,459.4 745.9,454.7 735.2,450.8 721.3,456.4"/>
<polygon fill="#15b1b4" points="244.9,457.1 258.8,454.0 248.2,449.0 234.3,452.4"/>
<polygon fill="#06a4ca" points="679.6,482.2 693.5,471.9 682.9,474.7 669.0,489.1"/>
<polygon fill="#0aacbe" points="318.6,467.5 332.5,470.5 321.9,463.8 308.0,461.7"/>
<polygon fill="#079ccf" points="665.7,493.2 679.6,482.2 669.0,489.1 655.1,504.9"/>
<polygon fill="#15b1b4" points="269.5,458.9 283.4,456.7 272.8,451.3 258.8,454.0"/>
<polygon fill="#0faeb9" points="294.1,462.0 308.0,461.7 297.3,455.6 283.4,456.7"/>
<polygon fill="#0c93d2" points="651.8,503.7 665.7,493.2 655.1,504.9 641.2,519.6"/>
<polygon fill="#15b1b4" points="444.7,456.7 458.6,430.8 447.9,445.0 434.0,470.7"/>
<polygon fill="#06a4ca" points="378.4,486.4 392.3,490.9 381.6,492.7 367.7,485.6"/>
<polygon fill="#15b1b4" points="756.6,458.9 770.5,455.1 759.8,450.6 745.9,454.7"/>
<polygon fill="#0faeb9" points="532.3,459.2 546.2,480.7 535.5,436.7 521.6,418.1"/>
<polygon fill="#108ed2" points="637.9,511.8 651.8,503.7 641.2,519.6 627.2,530.4"/>
<polygon fill="#b7bd64" points="500.3,383.5 514.2,395.1 503.6,396.4 489.6,388.1"/>
<polygon fill="#06a7c6" points="353.8,479.9 367.7,485.6 357.1,482.4 343.2,476.0"/>
<polygon fill="#15b1b4" points="781.1,459.6 795.0,456.0 784.4,451.4 770.5,455.1"/>
<polygon fill="#0faeb9" points="718.1,464.8 732.0,459.4 721.3,456.4 707.4,463.3"/>
<polygon fill="#1485d4" points="585.5,526.7 599.4,533.6 588.8,551.2 574.9,539.2"/>
<polygon fill="#06a4ca" points="403.0,486.7 416.9,484.5 406.2,492.5 392.3,490.9"/>
<polygon fill="#1485d4" points="561.0,524.0 574.9,539.2 564.2,543.8 550.3,523.6"/>
<polygon fill="#0aacbe" points="329.3,472.6 343.2,476.0 332.5,470.5 318.6,467.5"/>
<polygon fill="#108ed2" points="624.0,516.3 637.9,511.8 627.2,530.4 613.3,535.3"/>
<polygon fill="#15b1b4" points="255.6,461.9 269.5,458.9 258.8,454.0 244.9,457.1"/>
<polygon fill="#15b1b4" points="742.6,463.0 756.6,458.9 745.9,454.7 732.0,459.4"/>
<polygon fill="#06a7c6" points="529.0,480.7 542.9,501.9 532.3,459.2 518.4,442.9"/>
<polygon fill="#15b1b4" points="280.2,463.9 294.1,462.0 283.4,456.7 269.5,458.9"/>
<polygon fill="#0faeb9" points="304.7,467.2 318.6,467.5 308.0,461.7 294.1,462.0"/>
<polygon fill="#0aacbe" points="704.2,471.1 718.1,464.8 707.4,463.3 693.5,471.9"/>
<polygon fill="#4dbc92" points="458.6,430.8 472.5,404.2 461.8,416.3 447.9,445.0"/>
<polygon fill="#15b1b4" points="767.2,463.3 781.1,459.6 770.5,455.1 756.6,458.9"/>
<polygon fill="#71bf80" points="521.6,418.1 535.5,436.7 524.9,406.6 511.0,391.5"/>
<polygon fill="#aebe67" points="511.0,391.5 524.9,406.6 514.2,395.1 500.3,383.5"/>
<polygon fill="#07a9c2" points="690.3,478.3 704.2,471.1 693.5,471.9 679.6,482.2"/>
<polygon fill="#b7bd64" points="486.4,386.2 500.3,383.5 489.6,388.1 475.7,394.8"/>
<polygon fill="#07a9c2" points="364.5,482.5 378.4,486.4 367.7,485.6 353.8,479.9"/>
<polygon fill="#0faeb9" points="728.7,467.5 742.6,463.0 732.0,459.4 718.1,464.8"/>
<polygon fill="#06a7c6" points="389.0,485.6 403.0,486.7 392.3,490.9 378.4,486.4"/>
<polygon fill="#0c93d2" points="610.1,516.7 624.0,516.3 613.3,535.3 599.4,533.6"/>
<polygon fill="#92bf73" points="472.5,404.2 486.4,386.2 475.7,394.8 461.8,416.3"/>
<polygon fill="#0aacbe" points="427.5,476.7 441.4,464.9 430.8,475.2 416.9,484.5"/>
<polygon fill="#0aacbe" points="339.9,477.0 353.8,479.9 343.2,476.0 329.3,472.6"/>
<polygon fill="#15b1b4" points="441.4,464.9 455.3,446.0 444.7,456.7 430.8,475.2"/>
<polygon fill="#15b1b4" points="266.2,466.7 280.2,463.9 269.5,458.9 255.6,461.9"/>
<polygon fill="#06a7c6" points="676.4,486.0 690.3,478.3 679.6,482.2 665.7,493.2"/>
<polygon fill="#0faeb9" points="315.4,472.1 329.3,472.6 318.6,467.5 304.7,467.2"/>
<polygon fill="#15b1b4" points="290.8,468.8 304.7,467.2 294.1,462.0 280.2,463.9"/>
<polygon fill="#15b1b4" points="753.3,467.2 767.2,463.3 756.6,458.9 742.6,463.0"/>
<polygon fill="#079ccf" points="536.4,505.7 550.3,523.6 539.7,509.6 525.8,491.3"/>
<polygon fill="#06a4ca" points="525.8,491.3 539.7,509.6 529.0,480.7 515.1,466.4"/>
<polygon fill="#06a4ca" points="662.5,493.3 676.4,486.0 665.7,493.2 651.8,503.7"/>
<polygon fill="#0faeb9" points="714.8,472.4 728.7,467.5 718.1,464.8 704.2,471.1"/>
<polygon fill="#07a9c2" points="413.6,482.4 427.5,476.7 416.9,484.5 403.0,486.7"/>
<polygon fill="#0c93d2" points="571.6,517.3 585.5,526.7 574.9,539.2 561.0,524.0"/>
<polygon fill="#38b99e" points="455.3,446.0 469.2,422.5 458.6,430.8 444.7,456.7"/>
<polygon fill="#42bb98" points="518.4,442.9 532.3,459.2 521.6,418.1 507.7,408.7"/>
<polygon fill="#06a4ca" points="648.6,499.3 662.5,493.3 651.8,503.7 637.9,511.8"/>
<polygon fill="#15b1b4" points="739.4,471.1 753.3,467.2 742.6,463.0 728.7,467.5"/>
<polygon fill="#079ccf" points="547.1,510.0 561.0,524.0 550.3,523.6 536.4,505.7"/>
<polygon fill="#15b1b4" points="276.9,471.5 290.8,468.8 280.2,463.9 266.2,466.7"/>
<polygon fill="#0aacbe" points="375.1,484.1 389.0,485.6 378.4,486.4 364.5,482.5"/>
<polygon fill="#0faeb9" points="700.9,477.7 714.8,472.4 704.2,471.1 690.3,478.3"/>
<polygon fill="#0aacbe" points="350.6,480.6 364.5,482.5 353.8,479.9 339.9,477.0"/>
<polygon fill="#0998d1" points="596.2,514.0 610.1,516.7 599.4,533.6 585.5,526.7"/>
<polygon fill="#15b1b4" points="301.5,473.6 315.4,472.1 304.7,467.2 290.8,468.8"/>
<polygon fill="#b7bd64" points="497.0,388.9 511.0,391.5 500.3,383.5 486.4,386.2"/>
<polygon fill="#0faeb9" points="326.0,476.7 339.9,477.0 329.3,472.6 315.4,472.1"/>
<polygon fill="#1db3af" points="515.1,466.4 529.0,480.7 518.4,442.9 504.4,436.7"/>
<polygon fill="#71bf80" points="469.2,422.5 483.1,400.8 472.5,404.2 458.6,430.8"/>
<polygon fill="#0aacbe" points="399.7,484.5 413.6,482.4 403.0,486.7 389.0,485.6"/>
<polygon fill="#92bf73" points="507.7,408.7 521.6,418.1 511.0,391.5 497.0,388.9"/>
<polygon fill="#06a4ca" points="634.6,503.4 648.6,499.3 637.9,511.8 624.0,516.3"/>
<polygon fill="#15b1b4" points="725.5,475.3 739.4,471.1 728.7,467.5 714.8,472.4"/>
<polygon fill="#0aacbe" points="687.0,483.3 700.9,477.7 690.3,478.3 676.4,486.0"/>
<polygon fill="#a5be6b" points="483.1,400.8 497.0,388.9 486.4,386.2 472.5,404.2"/>
<polygon fill="#15b1b4" points="438.2,472.4 452.1,460.2 441.4,464.9 427.5,476.7"/>
<polygon fill="#2eb7a4" points="452.1,460.2 466.0,443.6 455.3,446.0 441.4,464.9"/>
<polygon fill="#15b1b4" points="287.6,476.2 301.5,473.6 290.8,468.8 276.9,471.5"/>
<polygon fill="#15b1b4" points="312.1,478.2 326.0,476.7 315.4,472.1 301.5,473.6"/>
<polygon fill="#59bd8c" points="504.4,436.7 518.4,442.9 507.7,408.7 493.8,412.1"/>
<polygon fill="#0faeb9" points="424.3,480.0 438.2,472.4 427.5,476.7 413.6,482.4"/>
<polygon fill="#0faeb9" points="336.7,480.9 350.6,480.6 339.9,477.0 326.0,476.7"/>
<polygon fill="#0aacbe" points="673.1,488.6 687.0,483.3 676.4,486.0 662.5,493.3"/>
<polygon fill="#4dbc92" points="466.0,443.6 479.9,425.7 469.2,422.5 455.3,446.0"/>
<polygon fill="#0faeb9" points="361.2,483.7 375.1,484.1 364.5,482.5 350.6,480.6"/>
<polygon fill="#0faeb9" points="511.8,480.5 525.8,491.3 515.1,466.4 501.2,461.2"/>
<polygon fill="#0faeb9" points="711.6,479.6 725.5,475.3 714.8,472.4 700.9,477.7"/>
<polygon fill="#06a4ca" points="620.7,505.3 634.6,503.4 624.0,516.3 610.1,516.7"/>
<polygon fill="#07a9c2" points="522.5,493.6 536.4,505.7 525.8,491.3 511.8,480.5"/>
<polygon fill="#0faeb9" points="385.8,485.5 399.7,484.5 389.0,485.6 375.1,484.1"/>
<polygon fill="#06a4ca" points="557.7,508.4 571.6,517.3 561.0,524.0 547.1,510.0"/>
<polygon fill="#92bf73" points="493.8,412.1 507.7,408.7 497.0,388.9 483.1,400.8"/>
<polygon fill="#7cbf7b" points="479.9,425.7 493.8,412.1 483.1,400.8 469.2,422.5"/>
<polygon fill="#06a0cd" points="582.3,509.6 596.2,514.0 585.5,526.7 571.6,517.3"/>
<polygon fill="#2eb7a4" points="501.2,461.2 515.1,466.4 504.4,436.7 490.5,440.5"/>
<polygon fill="#07a9c2" points="659.2,493.4 673.1,488.6 662.5,493.3 648.6,499.3"/>
<polygon fill="#0faeb9" points="410.4,484.4 424.3,480.0 413.6,482.4 399.7,484.5"/>
<polygon fill="#59bd8c" points="490.5,440.5 504.4,436.7 493.8,412.1 479.9,425.7"/>
<polygon fill="#0faeb9" points="697.7,484.0 711.6,479.6 700.9,477.7 687.0,483.3"/>
<polygon fill="#06a7c6" points="533.2,500.0 547.1,510.0 536.4,505.7 522.5,493.6"/>
<polygon fill="#15b1b4" points="298.2,480.8 312.1,478.2 301.5,473.6 287.6,476.2"/>
<polygon fill="#42bb98" points="476.6,450.5 490.5,440.5 479.9,425.7 466.0,443.6"/>
<polygon fill="#2eb7a4" points="462.7,462.3 476.6,450.5 466.0,443.6 452.1,460.2"/>
<polygon fill="#15b1b4" points="322.8,482.7 336.7,480.9 326.0,476.7 312.1,478.2"/>
<polygon fill="#0faeb9" points="347.3,484.8 361.2,483.7 350.6,480.6 336.7,480.9"/>
<polygon fill="#1db3af" points="448.8,472.7 462.7,462.3 452.1,460.2 438.2,472.4"/>
<polygon fill="#06a7c6" points="606.8,505.4 620.7,505.3 610.1,516.7 596.2,514.0"/>
<polygon fill="#0faeb9" points="371.9,486.7 385.8,485.5 375.1,484.1 361.2,483.7"/>
<polygon fill="#2eb7a4" points="487.3,463.3 501.2,461.2 490.5,440.5 476.6,450.5"/>
<polygon fill="#07a9c2" points="645.3,497.2 659.2,493.4 648.6,499.3 634.6,503.4"/>
<polygon fill="#15b1b4" points="434.9,480.5 448.8,472.7 438.2,472.4 424.3,480.0"/>
<polygon fill="#1db3af" points="497.9,477.0 511.8,480.5 501.2,461.2 487.3,463.3"/>
<polygon fill="#0faeb9" points="683.8,488.4 697.7,484.0 687.0,483.3 673.1,488.6"/>
<polygon fill="#0faeb9" points="396.4,487.3 410.4,484.4 399.7,484.5 385.8,485.5"/>
<polygon fill="#0faeb9" points="508.6,487.8 522.5,493.6 511.8,480.5 497.9,477.0"/>
<polygon fill="#2eb7a4" points="473.4,469.6 487.3,463.3 476.6,450.5 462.7,462.3"/>
<polygon fill="#15b1b4" points="308.9,485.5 322.8,482.7 312.1,478.2 298.2,480.8"/>
<polygon fill="#06a7c6" points="568.4,505.5 582.3,509.6 571.6,517.3 557.7,508.4"/>
<polygon fill="#07a9c2" points="543.8,502.1 557.7,508.4 547.1,510.0 533.2,500.0"/>
<polygon fill="#15b1b4" points="421.0,485.9 434.9,480.5 424.3,480.0 410.4,484.4"/>
<polygon fill="#15b1b4" points="333.4,487.1 347.3,484.8 336.7,480.9 322.8,482.7"/>
<polygon fill="#0aacbe" points="631.4,500.0 645.3,497.2 634.6,503.4 620.7,505.3"/>
<polygon fill="#15b1b4" points="358.0,488.7 371.9,486.7 361.2,483.7 347.3,484.8"/>
<polygon fill="#25b5a9" points="459.5,477.0 473.4,469.6 462.7,462.3 448.8,472.7"/>
<polygon fill="#0faeb9" points="669.9,492.5 683.8,488.4 673.1,488.6 659.2,493.4"/>
<polygon fill="#07a9c2" points="592.9,504.7 606.8,505.4 596.2,514.0 582.3,509.6"/>
<polygon fill="#1db3af" points="484.0,478.8 497.9,477.0 487.3,463.3 473.4,469.6"/>
<polygon fill="#15b1b4" points="382.5,489.9 396.4,487.3 385.8,485.5 371.9,486.7"/>
<polygon fill="#0faeb9" points="519.2,494.9 533.2,500.0 522.5,493.6 508.6,487.8"/>
<polygon fill="#1db3af" points="445.6,483.6 459.5,477.0 448.8,472.7 434.9,480.5"/>
<polygon fill="#15b1b4" points="407.1,490.0 421.0,485.9 410.4,484.4 396.4,487.3"/>
<polygon fill="#15b1b4" points="319.5,490.0 333.4,487.1 322.8,482.7 308.9,485.5"/>
<polygon fill="#0faeb9" points="656.0,496.1 669.9,492.5 659.2,493.4 645.3,497.2"/>
<polygon fill="#15b1b4" points="494.7,487.3 508.6,487.8 497.9,477.0 484.0,478.8"/>
<polygon fill="#1db3af" points="470.1,483.3 484.0,478.8 473.4,469.6 459.5,477.0"/>
<polygon fill="#0aacbe" points="617.5,501.9 631.4,500.0 620.7,505.3 606.8,505.4"/>
<polygon fill="#15b1b4" points="344.1,491.4 358.0,488.7 347.3,484.8 333.4,487.1"/>
<polygon fill="#15b1b4" points="431.7,489.1 445.6,483.6 434.9,480.5 421.0,485.9"/>
<polygon fill="#15b1b4" points="368.6,492.7 382.5,489.9 371.9,486.7 358.0,488.7"/>
<polygon fill="#0aacbe" points="554.5,502.9 568.4,505.5 557.7,508.4 543.8,502.1"/>
<polygon fill="#0faeb9" points="529.9,499.2 543.8,502.1 533.2,500.0 519.2,494.9"/>
<polygon fill="#15b1b4" points="393.2,493.5 407.1,490.0 396.4,487.3 382.5,489.9"/>
<polygon fill="#0aacbe" points="579.0,504.1 592.9,504.7 582.3,509.6 568.4,505.5"/>
<polygon fill="#1db3af" points="456.2,488.5 470.1,483.3 459.5,477.0 445.6,483.6"/>
<polygon fill="#15b1b4" points="505.3,494.0 519.2,494.9 508.6,487.8 494.7,487.3"/>
<polygon fill="#0faeb9" points="642.0,499.3 656.0,496.1 645.3,497.2 631.4,500.0"/>
<polygon fill="#1db3af" points="480.8,490.0 494.7,487.3 484.0,478.8 470.1,483.3"/>
<polygon fill="#15b1b4" points="417.8,493.6 431.7,489.1 421.0,485.9 407.1,490.0"/>
<polygon fill="#15b1b4" points="330.2,494.6 344.1,491.4 333.4,487.1 319.5,490.0"/>
<polygon fill="#0faeb9" points="603.6,503.4 617.5,501.9 606.8,505.4 592.9,504.7"/>
<polygon fill="#15b1b4" points="354.7,495.8 368.6,492.7 358.0,488.7 344.1,491.4"/>
<polygon fill="#15b1b4" points="442.3,493.5 456.2,488.5 445.6,483.6 431.7,489.1"/>
<polygon fill="#15b1b4" points="379.3,496.8 393.2,493.5 382.5,489.9 368.6,492.7"/>
<polygon fill="#0faeb9" points="628.1,502.2 642.0,499.3 631.4,500.0 617.5,501.9"/>
<polygon fill="#1db3af" points="466.9,494.0 480.8,490.0 470.1,483.3 456.2,488.5"/>
<polygon fill="#0faeb9" points="540.6,502.4 554.5,502.9 543.8,502.1 529.9,499.2"/>
<polygon fill="#15b1b4" points="516.0,499.3 529.9,499.2 519.2,494.9 505.3,494.0"/>
<polygon fill="#15b1b4" points="403.8,497.5 417.8,493.6 407.1,490.0 393.2,493.5"/>
<polygon fill="#15b1b4" points="491.4,496.0 505.3,494.0 494.7,487.3 480.8,490.0"/>
<polygon fill="#0faeb9" points="565.1,504.3 579.0,504.1 568.4,505.5 554.5,502.9"/>
<polygon fill="#15b1b4" points="340.8,499.1 354.7,495.8 344.1,491.4 330.2,494.6"/>
<polygon fill="#15b1b4" points="428.4,497.9 442.3,493.5 431.7,489.1 417.8,493.6"/>
<polygon fill="#0faeb9" points="589.7,504.9 603.6,503.4 592.9,504.7 579.0,504.1"/>
<polygon fill="#15b1b4" points="365.4,500.2 379.3,496.8 368.6,492.7 354.7,495.8"/>
<polygon fill="#15b1b4" points="453.0,498.4 466.9,494.0 456.2,488.5 442.3,493.5"/>
<polygon fill="#15b1b4" points="389.9,501.2 403.8,497.5 393.2,493.5 379.3,496.8"/>
<polygon fill="#0faeb9" points="614.2,504.9 628.1,502.2 617.5,501.9 603.6,503.4"/>
<polygon fill="#15b1b4" points="477.5,499.5 491.4,496.0 480.8,490.0 466.9,494.0"/>
<polygon fill="#15b1b4" points="502.1,501.4 516.0,499.3 505.3,494.0 491.4,496.0"/>
<polygon fill="#15b1b4" points="526.6,503.7 540.6,502.4 529.9,499.2 516.0,499.3"/>
<polygon fill="#15b1b4" points="414.5,501.9 428.4,497.9 417.8,493.6 403.8,497.5"/>
<polygon fill="#15b1b4" points="551.2,505.7 565.1,504.3 554.5,502.9 540.6,502.4"/>
<polygon fill="#15b1b4" points="351.5,503.7 365.4,500.2 354.7,495.8 340.8,499.1"/>
<polygon fill="#15b1b4" points="439.1,502.6 453.0,498.4 442.3,493.5 428.4,497.9"/>
<polygon fill="#15b1b4" points="575.8,506.9 589.7,504.9 579.0,504.1 565.1,504.3"/>
<polygon fill="#15b1b4" points="376.0,504.8 389.9,501.2 379.3,496.8 365.4,500.2"/>
<polygon fill="#15b1b4" points="463.6,503.4 477.5,499.5 466.9,494.0 453.0,498.4"/>
<polygon fill="#15b1b4" points="600.3,507.6 614.2,504.9 603.6,503.4 589.7,504.9"/>
<polygon fill="#15b1b4" points="488.2,504.7 502.1,501.4 491.4,496.0 477.5,499.5"/>
<polygon fill="#15b1b4" points="400.6,505.7 414.5,501.9 403.8,497.5 389.9,501.2"/>
<polygon fill="#15b1b4" points="512.7,506.3 526.6,503.7 516.0,499.3 502.1,501.4"/>
<polygon fill="#15b1b4" points="425.2,506.6 439.1,502.6 428.4,497.9 414.5,501.9"/>
<polygon fill="#15b1b4" points="537.3,508.0 551.2,505.7 540.6,502.4 526.6,503.7"/>
<polygon fill="#15b1b4" points="561.9,509.4 575.8,506.9 565.1,504.3 551.2,505.7"/>
<polygon fill="#15b1b4" points="449.7,507.4 463.6,503.4 453.0,498.4 439.1,502.6"/>
<polygon fill="#15b1b4" points="362.1,508.3 376.0,504.8 365.4,500.2 351.5,503.7"/>
<polygon fill="#15b1b4" points="586.4,510.5 600.3,507.6 589.7,504.9 575.8,506.9"/>
<polygon fill="#15b1b4" points="474.3,508.4 488.2,504.7 477.5,499.5 463.6,503.4"/>
<polygon fill="#15b1b4" points="386.7,509.4 400.6,505.7 389.9,501.2 376.0,504.8"/>
<polygon fill="#15b1b4" points="498.8,509.7 512.7,506.3 502.1,501.4 488.2,504.7"/>
<polygon fill="#15b1b4" points="411.2,510.3 425.2,506.6 414.5,501.9 400.6,505.7"/>
<polygon fill="#15b1b4" points="523.4,511.1 537.3,508.0 526.6,503.7 512.7,506.3"/>
<polygon fill="#15b1b4" points="435.8,511.3 449.7,507.4 439.1,502.6 425.2,506.6"/>
<polygon fill="#15b1b4" points="548.0,512.4 561.9,509.4 551.2,505.7 537.3,508.0"/>
<polygon fill="#15b1b4" points="460.4,512.3 474.3,508.4 463.6,503.4 449.7,507.4"/>
<polygon fill="#15b1b4" points="372.8,513.0 386.7,509.4 376.0,504.8 362.1,508.3"/>
<polygon fill="#15b1b4" points="572.5,513.6 586.4,510.5 575.8,506.9 561.9,509.4"/>
<polygon fill="#15b1b4" points="484.9,513.4 498.8,509.7 488.2,504.7 474.3,508.4"/>
<polygon fill="#15b1b4" points="397.3,514.0 411.2,510.3 400.6,505.7 386.7,509.4"/>
<polygon fill="#15b1b4" points="509.5,514.5 523.4,511.1 512.7,506.3 498.8,509.7"/>
<polygon fill="#15b1b4" points="421.9,515.0 435.8,511.3 425.2,506.6 411.2,510.3"/>
<polygon fill="#15b1b4" points="534.0,515.8 548.0,512.4 537.3,508.0 523.4,511.1"/>
<polygon fill="#15b1b4" points="446.5,516.0 460.4,512.3 449.7,507.4 435.8,511.3"/>
<polygon fill="#15b1b4" points="558.6,517.0 572.5,513.6 561.9,509.4 548.0,512.4"/>
<polygon fill="#15b1b4" points="471.0,517.1 484.9,513.4 474.3,508.4 460.4,512.3"/>
<polygon fill="#15b1b4" points="383.4,517.6 397.3,514.0 386.7,509.4 372.8,513.0"/>
<polygon fill="#15b1b4" points="495.6,518.2 509.5,514.5 498.8,509.7 484.9,513.4"/>
<polygon fill="#15b1b4" points="408.0,518.7 421.9,515.0 411.2,510.3 397.3,514.0"/>
<polygon fill="#15b1b4" points="520.1,519.3 534.0,515.8 523.4,511.1 509.5,514.5"/>
<polygon fill="#15b1b4" points="432.6,519.7 446.5,516.0 435.8,511.3 421.9,515.0"/>
<polygon fill="#15b1b4" points="544.7,520.5 558.6,517.0 548.0,512.4 534.0,515.8"/>
<polygon fill="#15b1b4" points="457.1,520.8 471.0,517.1 460.4,512.3 446.5,516.0"/>
<polygon fill="#15b1b4" points="481.7,521.8 495.6,518.2 484.9,513.4 471.0,517.1"/>
<polygon fill="#15b1b4" points="394.1,522.3 408.0,518.7 397.3,514.0 383.4,517.6"/>
<polygon fill="#15b1b4" points="506.2,522.9 520.1,519.3 509.5,514.5 495.6,518.2"/>
<polygon fill="#15b1b4" points="418.6,523.4 432.6,519.7 421.9,515.0 408.0,518.7"/>
<polygon fill="#15b1b4" points="530.8,524.1 544.7,520.5 534.0,515.8 520.1,519.3"/>
<polygon fill="#15b1b4" points="443.2,524.4 457.1,520.8 446.5,516.0 432.6,519.7"/>
<polygon fill="#15b1b4" points="467.8,525.5 481.7,521.8 471.0,517.1 457.1,520.8"/>
<polygon fill="#15b1b4" points="492.3,526.6 506.2,522.9 495.6,518.2 481.7,521.8"/>
<polygon fill="#15b1b4" points="404.7,527.0 418.6,523.4 408.0,518.7 394.1,522.3"/>
<polygon fill="#15b1b4" points="516.9,527.7 530.8,524.1 520.1,519.3 506.2,522.9"/>
<polygon fill="#15b1b4" points="429.3,528.0 443.2,524.4 432.6,519.7 418.6,523.4"/>
<polygon fill="#15b1b4" points="453.9,529.1 467.8,525.5 457.1,520.8 443.2,524.4"/>
<polygon fill="#15b1b4" points="478.4,530.2 492.3,526.6 481.7,521.8 467.8,525.5"/>
<polygon fill="#15b1b4" points="503.0,531.3 516.9,527.7 506.2,522.9 492.3,526.6"/>
<polygon fill="#15b1b4" points="415.4,531.6 429.3,528.0 418.6,523.4 404.7,527.0"/>
<polygon fill="#15b1b4" points="440.0,532.7 453.9,529.1 443.2,524.4 429.3,528.0"/>
<polygon fill="#15b1b4" points="464.5,533.8 478.4,530.2 467.8,525.5 453.9,529.1"/>
<polygon fill="#15b1b4" points="489.1,534.9 503.0,531.3 492.3,526.6 478.4,530.2"/>
<polygon fill="#15b1b4" points="426.0,536.3 440.0,532.7 429.3,528.0 415.4,531.6"/>
<polygon fill="#15b1b4" points="450.6,537.4 464.5,533.8 453.9,529.1 440.0,532.7"/>
<polygon fill="#15b1b4" points="475.2,538.5 489.1,534.9 478.4,530.2 464.5,533.8"/>
<polygon fill="#15b1b4" points="436.7,541.0 450.6,537.4 440.0,532.7 426.0,536.3"/>
<polygon fill="#15b1b4" points="461.3,542.1 475.2,538.5 464.5,533.8 450.6,537.4"/>
<polygon fill="#15b1b4" points="447.4,545.7 461.3,542.1 450.6,537.4 436.7,541.0"/>
</g>
<g stroke="#262626" stroke-width="1" fill="none" shape-rendering="crispEdges">
<line x1="444.1" y1="689.4" x2="861.3" y2="581.8" stroke="#262626" stroke-width="1"/>
<line x1="444.1" y1="689.4" x2="124.5" y2="549.2" stroke="#262626" stroke-width="1"/>
<line x1="124.5" y1="549.2" x2="124.5" y2="244.4" stroke="#262626" stroke-width="1"/>
<line x1="444.1" y1="689.4" x2="453.5" y2="693.5" stroke="#262626" stroke-width="1"/>
<line x1="444.1" y1="689.4" x2="434.1" y2="692.0" stroke="#262626" stroke-width="1"/>
<line x1="513.6" y1="671.5" x2="523.1" y2="675.6" stroke="#262626" stroke-width="1"/>
<line x1="390.8" y1="666.0" x2="380.9" y2="668.6" stroke="#262626" stroke-width="1"/>
<line x1="583.2" y1="653.5" x2="592.6" y2="657.7" stroke="#262626" stroke-width="1"/>
<line x1="337.6" y1="642.7" x2="327.6" y2="645.2" stroke="#262626" stroke-width="1"/>
<line x1="652.7" y1="635.6" x2="662.1" y2="639.7" stroke="#262626" stroke-width="1"/>
<line x1="284.3" y1="619.3" x2="274.3" y2="621.9" stroke="#262626" stroke-width="1"/>
<line x1="722.2" y1="617.6" x2="731.7" y2="621.8" stroke="#262626" stroke-width="1"/>
<line x1="231.0" y1="595.9" x2="221.1" y2="598.5" stroke="#262626" stroke-width="1"/>
<line x1="791.8" y1="599.7" x2="801.2" y2="603.8" stroke="#262626" stroke-width="1"/>
<line x1="177.8" y1="572.6" x2="167.8" y2="575.1" stroke="#262626" stroke-width="1"/>
<line x1="861.3" y1="581.8" x2="870.7" y2="585.9" stroke="#262626" stroke-width="1"/>
<line x1="124.5" y1="549.2" x2="114.5" y2="551.8" stroke="#262626" stroke-width="1"/>
<line x1="124.5" y1="549.2" x2="115.1" y2="545.1" stroke="#262626" stroke-width="1"/>
<line x1="124.5" y1="515.3" x2="115.1" y2="511.2" stroke="#262626" stroke-width="1"/>
<line x1="124.5" y1="481.5" x2="115.1" y2="477.3" stroke="#262626" stroke-width="1"/>
<line x1="124.5" y1="447.6" x2="115.1" y2="443.5" stroke="#262626" stroke-width="1"/>
<line x1="124.5" y1="413.7" x2="115.1" y2="409.6" stroke="#262626" stroke-width="1"/>
<line x1="124.5" y1="379.9" x2="115.1" y2="375.7" stroke="#262626" stroke-width="1"/>
<line x1="124.5" y1="346.0" x2="115.1" y2="341.9" stroke="#262626" stroke-width="1"/>
<line x1="124.5" y1="312.1" x2="115.1" y2="308.0" stroke="#262626" stroke-width="1"/>
<line x1="124.5" y1="278.3" x2="115.1" y2="274.1" stroke="#262626" stroke-width="1"/>
<line x1="124.5" y1="244.4" x2="115.1" y2="240.3" stroke="#262626" stroke-width="1"/>
</g>
<g font-family="'Liberation Sans', Arial, sans-serif" font-size="13.7" letter-spacing="-0.65" fill="#2e2e2e">
<text x="459.1" y="709.0" text-anchor="start">0</text>
<text x="427.7" y="707.0" text-anchor="end">0</text>
<text x="528.6" y="692.0" text-anchor="start">5</text>
<text x="374.4" y="684.0" text-anchor="end">5</text>
<text x="598.2" y="674.0" text-anchor="start">10</text>
<text x="321.2" y="660.0" text-anchor="end">10</text>
<text x="667.7" y="656.0" text-anchor="start">15</text>
<text x="267.9" y="637.0" text-anchor="end">15</text>
<text x="737.2" y="638.0" text-anchor="start">20</text>
<text x="214.6" y="614.0" text-anchor="end">20</text>
<text x="806.8" y="620.0" text-anchor="start">25</text>
<text x="161.4" y="591.0" text-anchor="end">25</text>
<text x="876.3" y="602.0" text-anchor="start">30</text>
<text x="108.1" y="567.0" text-anchor="end">30</text>
<text x="108.9" y="549.0" text-anchor="end">-8</text>
<text x="108.9" y="515.0" text-anchor="end">-6</text>
<text x="108.9" y="481.0" text-anchor="end">-4</text>
<text x="108.9" y="447.0" text-anchor="end">-2</text>
<text x="108.9" y="414.0" text-anchor="end">0</text>
<text x="108.9" y="380.0" text-anchor="end">2</text>
<text x="108.9" y="346.0" text-anchor="end">4</text>
<text x="108.9" y="312.0" text-anchor="end">6</text>
<text x="108.9" y="278.0" text-anchor="end">8</text>
<text x="108.9" y="244.0" text-anchor="end">10</text>
</g>
</svg>
</body></html>
